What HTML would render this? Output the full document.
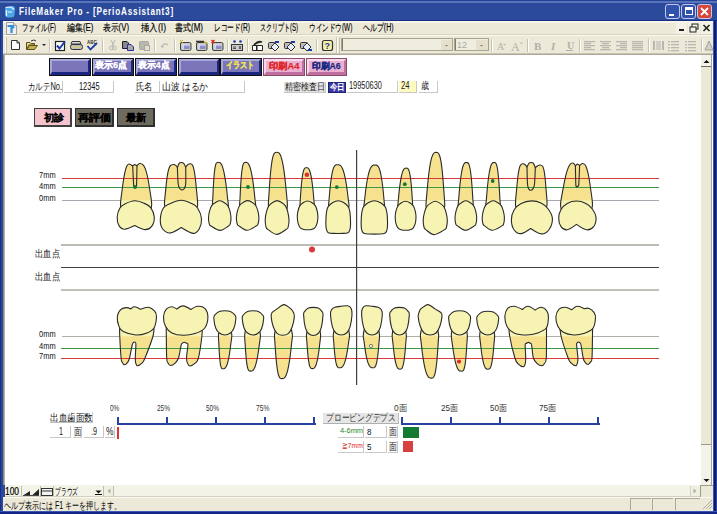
<!DOCTYPE html><html><head><meta charset="utf-8"><style>
*{margin:0;padding:0;box-sizing:border-box}
html,body{width:717px;height:514px;overflow:hidden;background:#2b4a9c}
body{position:relative;font-family:"Liberation Sans",sans-serif;font-size:11px;color:#000}
.a{position:absolute}
.t{position:absolute;white-space:nowrap;overflow:hidden;line-height:1}
</style></head><body>
<div class="a" style="left:0px;top:0px;width:717px;height:1px;background:#22419a"></div>
<div class="a" style="left:0px;top:1px;width:717px;height:2px;background:#5a74b8"></div>
<div class="a" style="left:0px;top:3px;width:717px;height:17px;background:#2b4a9c"></div>
<div class="a" style="left:0px;top:20px;width:717px;height:1px;background:#182f8a"></div>
<svg class="a" style="left:4px;top:5px" width="12" height="13" viewBox="0 0 12 13"><path d="M1 4 Q1 1.5 4 1.5 L9 1 Q11.5 1.5 11 4.5 L10.5 10 Q10 12.5 7 12.5 L3.5 12.5 Q1 12 1 9.5 Z" fill="#4aa8e8"/><path d="M1.5 2.5 L7 2 L10 4.5 M2.5 5 L2.5 11 M4 7 H8" stroke="#f0f4ff" stroke-width="1.2" fill="none"/></svg>
<div class="t" style="left:19px;top:7px;overflow:visible;color:#fff;font-weight:bold;font-size:10px;letter-spacing:1px"><span id="f1" style="display:inline-block;transform-origin:0 0;transform:scaleX(0.8170)">FileMaker Pro - [PerioAssistant3]</span></div>
<div class="a" style="left:665px;top:4px;width:15px;height:15px;background:#3152ac;border:1px solid #c4c8ee;border-radius:3px"></div>
<div class="a" style="left:681px;top:4px;width:15px;height:15px;background:#3152ac;border:1px solid #c4c8ee;border-radius:3px"></div>
<div class="a" style="left:697px;top:4px;width:15px;height:15px;background:#d8463a;border:1px solid #c4c8ee;border-radius:3px"></div>
<div class="a" style="left:669px;top:14px;width:5px;height:2px;background:#fff"></div>
<div class="a" style="left:685px;top:7px;width:8px;height:8px;border:1px solid #fff;border-top-width:3px"></div>
<svg class="a" style="left:697px;top:4px" width="15" height="15"><path d="M4 4 L11 11 M11 4 L4 11" stroke="#fff" stroke-width="1.8"/></svg>
<div class="a" style="left:0px;top:21px;width:3px;height:493px;background:#2848a0;border-left:1px solid #18308c"></div>
<div class="a" style="left:713px;top:21px;width:4px;height:493px;background:#0c1a70;border-left:1px solid #3a58b0;border-right:1px solid #2a4aa0"></div>
<div class="a" style="left:0px;top:511px;width:717px;height:3px;background:#12268a;border-top:1px solid #3a58b0"></div>
<div class="a" style="left:3px;top:21px;width:710px;height:14px;background:#ece9d8"></div>
<div class="a" style="left:3px;top:21px;width:710px;height:2px;background:#f8f6e8"></div>
<div class="a" style="left:3px;top:34px;width:710px;height:1px;background:#d8d4c0"></div>
<svg class="a" style="left:5px;top:22px" width="13" height="13"><path d="M1.5 0.5 H8.5 L11.5 3.5 V12.5 H1.5 Z" fill="#f0f0f0" stroke="#a0a0a0" stroke-width="1"/><path d="M8.5 0.5 V3.5 H11.5" fill="#d8d8d8" stroke="#a0a0a0"/><path d="M2.5 4 H7.5 L9 6 M6.5 4.5 V11" stroke="#3090e0" stroke-width="2.2" fill="none"/></svg>
<div class="t" style="left:22px;top:23px;overflow:visible;font-size:10px;color:#000;-webkit-text-stroke:0.15px #000"><span id="f2" style="display:inline-block;transform-origin:0 0;transform:scaleX(0.6442)">ファイル(F)</span></div>
<div class="t" style="left:66.5px;top:23px;overflow:visible;font-size:10px;color:#000;-webkit-text-stroke:0.15px #000"><span id="f3" style="display:inline-block;transform-origin:0 0;transform:scaleX(0.7948)">編集(E)</span></div>
<div class="t" style="left:103px;top:23px;overflow:visible;font-size:10px;color:#000;-webkit-text-stroke:0.15px #000"><span id="f4" style="display:inline-block;transform-origin:0 0;transform:scaleX(0.7798)">表示(V)</span></div>
<div class="t" style="left:140.6px;top:23px;overflow:visible;font-size:10px;color:#000;-webkit-text-stroke:0.15px #000"><span id="f5" style="display:inline-block;transform-origin:0 0;transform:scaleX(0.8488)">挿入(I)</span></div>
<div class="t" style="left:175px;top:23px;overflow:visible;font-size:10px;color:#000;-webkit-text-stroke:0.15px #000"><span id="f6" style="display:inline-block;transform-origin:0 0;transform:scaleX(0.8000)">書式(M)</span></div>
<div class="t" style="left:213.7px;top:23px;overflow:visible;font-size:10px;color:#000;-webkit-text-stroke:0.15px #000"><span id="f7" style="display:inline-block;transform-origin:0 0;transform:scaleX(0.6680)">レコード(R)</span></div>
<div class="t" style="left:259.8px;top:23px;overflow:visible;font-size:10px;color:#000;-webkit-text-stroke:0.15px #000"><span id="f8" style="display:inline-block;transform-origin:0 0;transform:scaleX(0.5999)">スクリプト(S)</span></div>
<div class="t" style="left:308.5px;top:23px;overflow:visible;font-size:10px;color:#000;-webkit-text-stroke:0.15px #000"><span id="f9" style="display:inline-block;transform-origin:0 0;transform:scaleX(0.6580)">ウインドウ(W)</span></div>
<div class="t" style="left:362.5px;top:23px;overflow:visible;font-size:10px;color:#000;-webkit-text-stroke:0.15px #000"><span id="f10" style="display:inline-block;transform-origin:0 0;transform:scaleX(0.6949)">ヘルプ(H)</span></div>
<div class="a" style="left:676px;top:22px;width:11px;height:12px;background:#f4f2e6"></div>
<div class="a" style="left:688px;top:22px;width:12px;height:12px;background:#f4f2e6"></div>
<div class="a" style="left:701px;top:22px;width:11px;height:12px;background:#f4f2e6"></div>
<div class="a" style="left:679px;top:29px;width:5px;height:2px;background:#202020"></div>
<svg class="a" style="left:688px;top:22px" width="12" height="12"><rect x="4" y="2" width="6" height="5" fill="none" stroke="#202020" stroke-width="1"/><rect x="2" y="5" width="6" height="5" fill="#f4f2e6" stroke="#202020" stroke-width="1"/></svg>
<svg class="a" style="left:701px;top:22px" width="11" height="12"><path d="M2.5 3 L8.5 9 M8.5 3 L2.5 9" stroke="#202020" stroke-width="1.6"/></svg>
<div class="a" style="left:3px;top:35px;width:710px;height:19px;background:#ece9d8"></div>
<div class="a" style="left:3px;top:35px;width:710px;height:1px;background:#faf9f0"></div>
<div class="a" style="left:3px;top:53px;width:710px;height:1px;background:#c9c5b0"></div>
<div class="a" style="left:3px;top:54px;width:710px;height:1px;background:#aca899"></div>
<svg class="a" style="left:0;top:0" width="717" height="60"><rect x="6" y="37" width="1" height="16" fill="#c8c4b0"/><rect x="5" y="37" width="1" height="16" fill="#fff"/><path d="M11.5 40.5 H17 L19.5 43 V49.5 H11.5 Z" fill="#fff" stroke="#333" stroke-width="1"/><path d="M17 40.5 V43 H19.5" fill="none" stroke="#333"/><path d="M26.5 42.5 H30 L31 43.5 H34.5 V45 H29 L26.5 49.5 Z" fill="#e8d27a" stroke="#5a5020" stroke-width="1"/><path d="M27 49.5 L29.5 45.5 H37.5 L34.5 49.5 Z" fill="#c8b050" stroke="#5a5020" stroke-width="1"/><path d="M31 41 Q34 39 36 41" stroke="#333" fill="none"/><path d="M42 44 H46 L44 46 Z" fill="#222"/><rect x="49" y="39" width="1" height="13" fill="#c5c2b2"/><rect x="50" y="39" width="1" height="13" fill="#ffffff"/><rect x="55.5" y="41.5" width="9" height="9" fill="#fff" stroke="#222" stroke-width="1.2"/><path d="M57 45.5 L59.5 48.5 L65 41.5" stroke="#1a3aa8" stroke-width="2" fill="none"/><path d="M72 41.5 H80 L81 44 H71 Z" fill="#ddd" stroke="#333"/><rect x="70.5" y="44.5" width="12" height="5" rx="2" fill="#bbb" stroke="#333"/><rect x="72" y="46.5" width="9" height="1" fill="#e0d060"/><text x="87" y="44" font-size="4.5" font-family="Liberation Sans" font-weight="bold" fill="#333">ABC</text><path d="M87.5 46 L90.5 49.5 L97 43" stroke="#1a3aa8" stroke-width="1.8" fill="none"/><rect x="102" y="39" width="1" height="13" fill="#c5c2b2"/><rect x="103" y="39" width="1" height="13" fill="#ffffff"/><path d="M111 40 L114 46 M115 40 L112 46" stroke="#b8b8b0" stroke-width="1"/><circle cx="111.5" cy="48" r="1.8" fill="none" stroke="#b8b8b0"/><circle cx="114.5" cy="48" r="1.8" fill="none" stroke="#b8b8b0"/><path d="M122.5 41.5 H127 L128.5 43 V48.5 H122.5 Z" fill="#888" stroke="#222"/><path d="M127.5 44.5 H131 L133.5 47 V50.5 H127.5 Z" fill="#aaa" stroke="#2a2aa0"/><rect x="139.5" y="41.5" width="9" height="8" rx="1" fill="#b8b8b0" stroke="#a8a8a0"/><rect x="144.5" y="45.5" width="5" height="5" fill="#e0e0d8" stroke="#a8a8a0"/><rect x="154" y="39" width="1" height="13" fill="#c5c2b2"/><rect x="155" y="39" width="1" height="13" fill="#ffffff"/><path d="M161 47 L164 44 M161 47 H164 M161.5 46.5 Q165 42 168 45" stroke="#b8b8b0" stroke-width="1.2" fill="none"/><rect x="174" y="39" width="1" height="13" fill="#c5c2b2"/><rect x="175" y="39" width="1" height="13" fill="#ffffff"/><rect x="180.5" y="42.5" width="10.5" height="8" rx="1.5" fill="#c8c8c0" stroke="#404040"/><rect x="182.5" y="44.5" width="7" height="4.5" fill="#8c8cd0"/><rect x="182.5" y="44.5" width="1.2" height="4.5" fill="#f0f0f8"/><rect x="182.5" y="44.5" width="7" height="1" fill="#f0f0f8"/><path d="M180 40 L183 43 M183 40 L180 43" stroke="#c8a820" stroke-width="1"/><rect x="196.5" y="42.5" width="10.5" height="8" rx="1.5" fill="#c8c8c0" stroke="#404040"/><rect x="198.5" y="44.5" width="7" height="4.5" fill="#8c8cd0"/><rect x="198.5" y="44.5" width="1.2" height="4.5" fill="#f0f0f8"/><rect x="198.5" y="44.5" width="7" height="1" fill="#f0f0f8"/><path d="M196 41.5 H204" stroke="#333" stroke-width="1.5"/><path d="M204 42 L207 43" stroke="#c8a820" stroke-width="1.5"/><rect x="212.5" y="42.5" width="10.5" height="8" rx="1.5" fill="#c8c8c0" stroke="#404040"/><rect x="214.5" y="44.5" width="7" height="4.5" fill="#8c8cd0"/><rect x="214.5" y="44.5" width="1.2" height="4.5" fill="#f0f0f8"/><rect x="214.5" y="44.5" width="7" height="1" fill="#f0f0f8"/><path d="M211.5 40 L214.5 43 M214.5 40 L211.5 43" stroke="#e02020" stroke-width="1.3"/><rect x="227" y="39" width="1" height="13" fill="#c5c2b2"/><rect x="228" y="39" width="1" height="13" fill="#ffffff"/><circle cx="234.5" cy="41.5" r="1.3" fill="#1a3aa8"/><circle cx="240.5" cy="41.5" r="1.3" fill="#1a3aa8"/><rect x="231.5" y="44.5" width="11" height="6" fill="#ccc" stroke="#333"/><path d="M233 47 H236 M233 48.5 H236 M239 46 L241 49 M241 46 L239 49" stroke="#333" stroke-width="0.8"/><rect x="247" y="39" width="1" height="13" fill="#c5c2b2"/><rect x="248" y="39" width="1" height="13" fill="#ffffff"/><path d="M252.5 45.5 H262.5 V50.5 H252.5 Z" fill="#fff" stroke="#222"/><path d="M254 45 Q258 40 262 42" fill="#333" stroke="#222" stroke-width="1.5"/><rect x="256" y="45" width="1.5" height="5.5" fill="#222"/><rect x="268.5" y="42.5" width="7" height="6" rx="1" fill="#bbb" stroke="#333"/><path d="M271 47 L275 43 L279 47 L275 51 Z" fill="#e8ecff" stroke="#333"/><path d="M275 42 H279" stroke="#1a3aa8" stroke-width="2"/><rect x="284.5" y="42.5" width="7" height="6" rx="1" fill="#bbb" stroke="#333"/><path d="M287 47 L291 43 L295 47 L291 51 Z" fill="#e8ecff" stroke="#333"/><path d="M291 42 H295" stroke="#1a3aa8" stroke-width="2"/><rect x="300.5" y="42.5" width="7" height="6" rx="1" fill="#bbb" stroke="#333"/><path d="M303 47 L307 43 L311 47 L307 51 Z" fill="#e8ecff" stroke="#333"/><path d="M308 50 H312" stroke="#1a3aa8" stroke-width="2"/><rect x="316" y="39" width="1" height="13" fill="#c5c2b2"/><rect x="317" y="39" width="1" height="13" fill="#ffffff"/><rect x="322.5" y="40.5" width="10" height="10" rx="2" fill="#f8f0a0" stroke="#333" stroke-width="1.2"/><text x="324.5" y="49" font-size="9" font-family="Liberation Sans" font-weight="bold" fill="#1a3aa8">?</text><rect x="336" y="37" width="1" height="16" fill="#c8c4b0"/><rect x="337" y="37" width="1" height="16" fill="#fff"/><rect x="339" y="37" width="1" height="16" fill="#c8c4b0"/><rect x="341.5" y="38.5" width="111" height="12" fill="#efedde" stroke="#a8a490"/><rect x="342" y="39" width="1" height="11" fill="#807c68"/><rect x="441" y="40" width="11" height="10" fill="#e4e0cc"/><path d="M445 45 H448 L446.5 46.5 Z" fill="#777"/><rect x="454.5" y="38.5" width="34" height="12" fill="#efedde" stroke="#a8a490"/><rect x="455" y="39" width="1" height="11" fill="#807c68"/><rect x="476" y="40" width="12" height="10" fill="#e4e0cc"/><path d="M480 45 H483 L481.5 46.5 Z" fill="#777"/><text x="457" y="48" font-size="9" font-family="Liberation Sans" fill="#aaa">12</text><rect x="491" y="39" width="1" height="13" fill="#c5c2b2"/><rect x="492" y="39" width="1" height="13" fill="#ffffff"/><text x="497" y="50" font-size="10" font-family="Liberation Serif" fill="#b0b0a8">A</text><path d="M503 44 H506 L504.5 45.5 Z" fill="#b0b0a8"/><text x="511" y="51" font-size="12" font-family="Liberation Serif" fill="#b0b0a8">A</text><path d="M520 43.5 H523 L521.5 42 Z" fill="#b0b0a8"/><rect x="527" y="39" width="1" height="13" fill="#c5c2b2"/><rect x="528" y="39" width="1" height="13" fill="#ffffff"/><text x="534" y="50" font-size="11" font-family="Liberation Serif" font-weight="bold" fill="#b0b0a8">B</text><text x="551" y="50" font-size="11" font-family="Liberation Serif" font-style="italic" font-weight="bold" fill="#b0b0a8">I</text><text x="567" y="49" font-size="10" font-family="Liberation Serif" font-weight="bold" fill="#b0b0a8">U</text><rect x="566" y="50" width="7" height="1" fill="#b0b0a8"/><rect x="579" y="39" width="1" height="13" fill="#c5c2b2"/><rect x="580" y="39" width="1" height="13" fill="#ffffff"/><rect x="584" y="41" width="11" height="1.3" fill="#b8b8b0"/><rect x="584" y="43" width="7" height="1.3" fill="#b8b8b0"/><rect x="584" y="45" width="11" height="1.3" fill="#b8b8b0"/><rect x="584" y="47" width="7" height="1.3" fill="#b8b8b0"/><rect x="584" y="49" width="11" height="1.3" fill="#b8b8b0"/><rect x="600" y="41" width="11" height="1.3" fill="#b8b8b0"/><rect x="602" y="43" width="7" height="1.3" fill="#b8b8b0"/><rect x="600" y="45" width="11" height="1.3" fill="#b8b8b0"/><rect x="602" y="47" width="7" height="1.3" fill="#b8b8b0"/><rect x="600" y="49" width="11" height="1.3" fill="#b8b8b0"/><rect x="616" y="41" width="11" height="1.3" fill="#b8b8b0"/><rect x="620" y="43" width="7" height="1.3" fill="#b8b8b0"/><rect x="616" y="45" width="11" height="1.3" fill="#b8b8b0"/><rect x="620" y="47" width="7" height="1.3" fill="#b8b8b0"/><rect x="616" y="49" width="11" height="1.3" fill="#b8b8b0"/><rect x="632" y="41" width="11" height="1.3" fill="#b8b8b0"/><rect x="632" y="43" width="11" height="1.3" fill="#b8b8b0"/><rect x="632" y="45" width="11" height="1.3" fill="#b8b8b0"/><rect x="632" y="47" width="11" height="1.3" fill="#b8b8b0"/><rect x="632" y="49" width="11" height="1.3" fill="#b8b8b0"/><rect x="648" y="39" width="1" height="13" fill="#c5c2b2"/><rect x="649" y="39" width="1" height="13" fill="#ffffff"/><rect x="653" y="41" width="2" height="9" fill="#b8b8b0"/><rect x="662" y="41" width="2" height="9" fill="#b8b8b0"/><rect x="656" y="41" width="5" height="9" fill="#cfcfc8"/><rect x="668" y="41" width="2" height="1.3" fill="#b8b8b0"/><rect x="671" y="41" width="8" height="1.3" fill="#b8b8b0"/><rect x="685" y="41" width="2" height="1.3" fill="#b8b8b0"/><rect x="688" y="41" width="8" height="1.3" fill="#b8b8b0"/><rect x="668" y="44" width="2" height="1.3" fill="#b8b8b0"/><rect x="671" y="44" width="8" height="1.3" fill="#b8b8b0"/><rect x="685" y="44" width="2" height="1.3" fill="#b8b8b0"/><rect x="688" y="44" width="8" height="1.3" fill="#b8b8b0"/><rect x="668" y="47" width="2" height="1.3" fill="#b8b8b0"/><rect x="671" y="47" width="8" height="1.3" fill="#b8b8b0"/><rect x="685" y="47" width="2" height="1.3" fill="#b8b8b0"/><rect x="688" y="47" width="8" height="1.3" fill="#b8b8b0"/><rect x="668" y="50" width="2" height="1.3" fill="#b8b8b0"/><rect x="671" y="50" width="8" height="1.3" fill="#b8b8b0"/><rect x="685" y="50" width="2" height="1.3" fill="#b8b8b0"/><rect x="688" y="50" width="8" height="1.3" fill="#b8b8b0"/><rect x="701" y="39" width="1" height="13" fill="#c5c2b2"/><rect x="702" y="39" width="1" height="13" fill="#ffffff"/><path d="M705 50 L709 41 L713 50 Z" fill="#d0d0c8" stroke="#a0a098"/></svg>
<div class="a" style="left:3px;top:55px;width:1px;height:430px;background:#8c8a74"></div>
<div class="a" style="left:4px;top:55px;width:1px;height:430px;background:#b4b2a0"></div>
<div class="a" style="left:5px;top:55px;width:696px;height:430px;background:#ffffff"></div>
<div class="a" style="left:701px;top:55px;width:12px;height:430px;background:#f4f3ea"></div>
<div class="a" style="left:711px;top:55px;width:1px;height:430px;background:#a8a498"></div>
<div class="a" style="left:712px;top:55px;width:1px;height:430px;background:#ffffff"></div>
<div class="a" style="left:702px;top:57px;width:9px;height:9px;background:#f4f3ea"></div>
<svg class="a" style="left:702px;top:57px" width="9" height="9"><path d="M1.5 6 L4.5 3 L7.5 6 Z" fill="#111"/></svg>
<div class="a" style="left:701px;top:66px;width:10px;height:379px;background:#ebe8d6;border-top:1px solid #6e6c60;border-bottom:1px solid #9d9a88"></div>
<div class="a" style="left:702px;top:475px;width:9px;height:10px;background:#f4f3ea"></div>
<svg class="a" style="left:702px;top:475px" width="9" height="10"><path d="M1.5 4 L4.5 7 L7.5 4 Z" fill="#111"/></svg>
<div class="a" style="left:5px;top:485px;width:708px;height:11px;background:#f4f3e8"></div>
<div class="a" style="left:5px;top:496px;width:708px;height:1px;background:#d4d0c0"></div>
<div class="t" style="left:5px;top:487px;overflow:visible;font-size:10px;color:#000;-webkit-text-stroke:0.2px #000"><span id="f11" style="display:inline-block;transform-origin:0 0;transform:scaleX(0.8390)">100</span></div>
<div class="a" style="left:21px;top:486px;width:1px;height:10px;background:#c0bca8"></div>
<svg class="a" style="left:21px;top:486px" width="33" height="11"><path d="M2 9.5 H9 V5 Z M11 9.5 H18 V3 Z" fill="#222"/><rect x="2" y="9" width="16" height="1" fill="#444"/><rect x="20.5" y="2.5" width="11" height="7" fill="#f4f4f4" stroke="#333"/><rect x="21" y="4.5" width="10" height="1" fill="#333"/><rect x="0" y="0" width="1" height="11" fill="#c0bca8"/><rect x="19" y="0" width="1" height="11" fill="#c0bca8"/></svg>
<div class="a" style="left:53px;top:486px;width:1px;height:10px;background:#c0bca8"></div>
<div class="t" style="left:55px;top:487px;overflow:visible;font-size:10px;color:#000"><span id="f12" style="display:inline-block;transform-origin:0 0;transform:scaleX(0.5750)">ブラウズ</span></div>
<svg class="a" style="left:95px;top:489px" width="8" height="6"><path d="M0.5 1.5 H6.5 L3.5 4.5 Z" fill="#111"/><rect x="0" y="5" width="7" height="1" fill="#111"/></svg>
<div class="a" style="left:103px;top:486px;width:1px;height:10px;background:#c0bca8"></div>
<div class="a" style="left:104px;top:486px;width:10px;height:10px;background:#f0efe4;border-right:1px solid #c0bca8"></div>
<svg class="a" style="left:104px;top:486px" width="10" height="10"><path d="M6.5 2.5 L3.5 5 L6.5 7.5 Z" fill="#b0ae9c"/></svg>
<div class="a" style="left:690px;top:486px;width:10px;height:10px;background:#f0efe4;border-left:1px solid #d8d4c4"></div>
<svg class="a" style="left:690px;top:486px" width="10" height="10"><path d="M3.5 2.5 L6.5 5 L3.5 7.5 Z" fill="#b0ae9c"/></svg>
<div class="a" style="left:700px;top:485px;width:13px;height:12px;background:#ece9d8;border-left:1px solid #9d9a88;border-top:1px solid #9d9a88"></div>
<div class="a" style="left:3px;top:497px;width:710px;height:14px;background:#ece9d8"></div>
<div class="a" style="left:3px;top:497px;width:710px;height:1px;background:#fbfaf2"></div>
<div class="t" style="left:4px;top:501px;overflow:visible;font-size:10px;color:#000"><span id="f13" style="display:inline-block;transform-origin:0 0;transform:scaleX(0.6996)">ヘルプ表示には F1 キーを押します。</span></div>
<div class="a" style="left:630px;top:498px;width:21px;height:12px;border-top:1px solid #aca899;border-left:1px solid #aca899"></div>
<div class="a" style="left:652px;top:498px;width:21px;height:12px;border-top:1px solid #aca899;border-left:1px solid #aca899"></div>
<div class="a" style="left:675px;top:498px;width:25px;height:12px;border-top:1px solid #aca899;border-left:1px solid #aca899"></div>
<svg class="a" style="left:700px;top:497px" width="13" height="13"><path d="M12 3 L3 12 M12 6 L6 12 M12 9 L9 12" stroke="#b0ae9c" stroke-width="1"/></svg>
<div class="a" style="left:49px;top:58px;width:42px;height:18px;background:#111;"></div>
<div class="a" style="left:50px;top:59px;width:40px;height:16px;background:#1f2e8e;border-top:2px solid #a8a8d8;border-left:2px solid #a8a8d8;border-right:2px solid #1a2680;border-bottom:3px solid #1a2680"></div>
<div class="a" style="left:52px;top:61px;width:36px;height:11px;background:#7b76ba"></div>
<div class="a" style="left:92px;top:58px;width:42px;height:18px;background:#111;"></div>
<div class="a" style="left:93px;top:59px;width:40px;height:16px;background:#1f2e8e;border-top:2px solid #a8a8d8;border-left:2px solid #a8a8d8;border-right:2px solid #1a2680;border-bottom:3px solid #1a2680"></div>
<div class="a" style="left:95px;top:61px;width:36px;height:11px;background:#7b76ba"></div>
<div class="t" style="left:95px;top:61px;overflow:visible;font-size:9px;font-weight:bold;color:#fff;-webkit-text-stroke:0.25px #fff"><span id="f14" style="display:inline-block;transform-origin:0 0;transform:scaleX(0.9995)">表示6点</span></div>
<div class="a" style="left:135px;top:58px;width:42px;height:18px;background:#111;"></div>
<div class="a" style="left:136px;top:59px;width:40px;height:16px;background:#1f2e8e;border-top:2px solid #a8a8d8;border-left:2px solid #a8a8d8;border-right:2px solid #1a2680;border-bottom:3px solid #1a2680"></div>
<div class="a" style="left:138px;top:61px;width:36px;height:11px;background:#7b76ba"></div>
<div class="t" style="left:138.3px;top:61px;overflow:visible;font-size:9px;font-weight:bold;color:#fff;-webkit-text-stroke:0.25px #fff"><span id="f15" style="display:inline-block;transform-origin:0 0;transform:scaleX(0.9808)">表示4点</span></div>
<div class="a" style="left:178px;top:58px;width:42px;height:18px;background:#111;"></div>
<div class="a" style="left:179px;top:59px;width:40px;height:16px;background:#1f2e8e;border-top:2px solid #a8a8d8;border-left:2px solid #a8a8d8;border-right:2px solid #1a2680;border-bottom:3px solid #1a2680"></div>
<div class="a" style="left:181px;top:61px;width:36px;height:11px;background:#7b76ba"></div>
<div class="a" style="left:220px;top:58px;width:42px;height:18px;background:#111;"></div>
<div class="a" style="left:221px;top:59px;width:40px;height:16px;background:#1f2e8e;border-top:2px solid #a8a8d8;border-left:2px solid #a8a8d8;border-right:2px solid #1a2680;border-bottom:3px solid #1a2680"></div>
<div class="a" style="left:223px;top:61px;width:36px;height:11px;background:#7b76ba"></div>
<div class="t" style="left:226.3px;top:61px;overflow:visible;font-size:9px;font-weight:bold;color:#f0e050;-webkit-text-stroke:0.25px #f0e050"><span id="f16" style="display:inline-block;transform-origin:0 0;transform:scaleX(0.7917)">イラスト</span></div>
<div class="a" style="left:263px;top:58px;width:42px;height:18px;background:#8a4a6a;"></div>
<div class="a" style="left:264px;top:59px;width:40px;height:16px;background:#e8a8cc;border-top:2px solid #f8d8ec;border-left:2px solid #f8d8ec;border-right:2px solid #c070a0;border-bottom:3px solid #c070a0"></div>
<div class="a" style="left:266px;top:61px;width:36px;height:11px;background:#eab0d2"></div>
<div class="t" style="left:268.6px;top:62px;overflow:visible;font-size:9px;font-weight:bold;color:#e02828;-webkit-text-stroke:0.25px #e02828"><span id="f17" style="display:inline-block;transform-origin:0 0;transform:scaleX(1.0300)">印刷A4</span></div>
<div class="a" style="left:306px;top:58px;width:41px;height:18px;background:#8a4a6a;"></div>
<div class="a" style="left:307px;top:59px;width:39px;height:16px;background:#e8a8cc;border-top:2px solid #f8d8ec;border-left:2px solid #f8d8ec;border-right:2px solid #c070a0;border-bottom:3px solid #c070a0"></div>
<div class="a" style="left:309px;top:61px;width:35px;height:11px;background:#eab0d2"></div>
<div class="t" style="left:312px;top:62px;overflow:visible;font-size:9px;font-weight:bold;color:#1a2a80;-webkit-text-stroke:0.25px #1a2a80"><span id="f18" style="display:inline-block;transform-origin:0 0;transform:scaleX(0.9656)">印刷A6</span></div>
<div class="a" style="left:24px;top:81px;width:39px;height:12px;background:#fff;border-right:1px solid #c8c8c8;border-bottom:1px solid #c8c8c8"></div>
<div class="t" style="left:27.9px;top:82px;overflow:visible;font-size:10px;color:#111"><span id="f19" style="display:inline-block;transform-origin:0 0;transform:scaleX(0.7462)">カルテNo.</span></div>
<div class="a" style="left:64px;top:81px;width:50px;height:12px;background:#fff;border-right:1px solid #c8c8c8;border-bottom:1px solid #c8c8c8"></div>
<div class="t" style="left:78.7px;top:82px;overflow:visible;font-size:10px;color:#111"><span id="f20" style="display:inline-block;transform-origin:0 0;transform:scaleX(0.7407)">12345</span></div>
<div class="a" style="left:135px;top:81px;width:25px;height:12px;background:#fff;border-right:1px solid #c8c8c8;border-bottom:1px solid #c8c8c8"></div>
<div class="t" style="left:135.9px;top:82px;overflow:visible;font-size:10px;color:#111"><span id="f21" style="display:inline-block;transform-origin:0 0;transform:scaleX(0.8350)">氏名</span></div>
<div class="a" style="left:161px;top:81px;width:84px;height:12px;background:#fff;border-right:1px solid #c8c8c8;border-bottom:1px solid #c8c8c8"></div>
<div class="t" style="left:161.8px;top:82px;overflow:visible;font-size:10px;color:#111"><span id="f22" style="display:inline-block;transform-origin:0 0;transform:scaleX(0.8715)">山波 はるか</span></div>
<div class="a" style="left:284px;top:82px;width:42px;height:11px;background:#e4e4e4;border-right:1px solid #c8c8c8;border-bottom:1px solid #c8c8c8"></div>
<div class="t" style="left:284.5px;top:82px;overflow:visible;font-size:10px;color:#222"><span id="f23" style="display:inline-block;transform-origin:0 0;transform:scaleX(0.8000)">精密検査日</span></div>
<div class="a" style="left:328px;top:82px;width:18px;height:11px;background:#3838a0;border:1px solid #202070"></div>
<div class="t" style="left:329.6px;top:83px;overflow:visible;font-size:9px;color:#fff;font-weight:bold"><span id="f24" style="display:inline-block;transform-origin:0 0;transform:scaleX(0.8333)">今日</span></div>
<div class="a" style="left:347px;top:81px;width:51px;height:12px;background:#fff;border-right:1px solid #c8c8c8;border-bottom:1px solid #c8c8c8"></div>
<div class="t" style="left:349.2px;top:81px;overflow:visible;font-size:10px;color:#222"><span id="f25" style="display:inline-block;transform-origin:0 0;transform:scaleX(0.7416)">19950630</span></div>
<div class="a" style="left:399px;top:81px;width:18px;height:12px;background:#fffac0;border-right:1px solid #c8c8c8;border-bottom:1px solid #c8c8c8"></div>
<div class="t" style="left:400.5px;top:81px;overflow:visible;font-size:10px;color:#222"><span id="f26" style="display:inline-block;transform-origin:0 0;transform:scaleX(0.7640)">24</span></div>
<div class="a" style="left:419px;top:81px;width:19px;height:12px;background:#fff;border-right:1px solid #c8c8c8;border-bottom:1px solid #c8c8c8"></div>
<div class="t" style="left:420.6px;top:81px;overflow:visible;font-size:10px;color:#222"><span id="f27" style="display:inline-block;transform-origin:0 0;transform:scaleX(0.8000)">歳</span></div>
<div class="a" style="left:34px;top:108px;width:38px;height:19px;background:#f6c4cc;border:1px solid #404040;border-right-width:2px;border-bottom-width:2px"></div>
<div class="t" style="left:43.6px;top:113px;overflow:visible;font-size:10px;font-weight:bold;color:#000;-webkit-text-stroke:0.1px #000"><span id="f28" style="display:inline-block;transform-origin:0 0;transform:scaleX(1.0200)">初診</span></div>
<div class="a" style="left:75px;top:108px;width:39px;height:19px;background:#6e6a5e;border:1px solid #303030;border-right-width:2px;border-bottom-width:2px"></div>
<div class="t" style="left:77.7px;top:113px;overflow:visible;font-size:10px;font-weight:bold;color:#000;-webkit-text-stroke:0.1px #000"><span id="f29" style="display:inline-block;transform-origin:0 0;transform:scaleX(1.1100)">再評価</span></div>
<div class="a" style="left:117px;top:108px;width:38px;height:19px;background:#6e6a5e;border:1px solid #303030;border-right-width:2px;border-bottom-width:2px"></div>
<div class="t" style="left:125.6px;top:113px;overflow:visible;font-size:10px;font-weight:bold;color:#000;-webkit-text-stroke:0.1px #000"><span id="f30" style="display:inline-block;transform-origin:0 0;transform:scaleX(1.0200)">最新</span></div>
<svg class="a" style="left:0;top:0" width="717" height="514"><rect x="62" y="200" width="597" height="1" fill="#a8a8b0"/><rect x="62" y="336" width="597" height="1" fill="#b0b0a8"/><defs><clipPath id="cu"><path d="M123 213 C123 213 120.63 208.97 120.5 205 C120.37 201.03 121.64 193.93 122.23 189.2 C122.82 184.47 123.46 179.96 124.04 176.6 C124.62 173.24 125.18 170.93 125.72 169.04 C126.26 167.15 126.7 166.1 127.27 165.26 C127.83 164.42 128.44 164.06 129.1 164 C129.76 163.94 130.6 164.58 131.2 164.9 C131.8 165.22 132.7 165.9 132.7 165.9 C132.7 165.9 133.2 165.53 133.55 165.3 C133.9 165.07 134.38 164.5 134.8 164.5 C135.23 164.5 135.73 165.07 136.1 165.3 C136.47 165.53 137 165.9 137 165.9 C137 165.9 137.67 164.8 138.15 164.4 C138.63 164 139.08 163.44 139.9 163.5 C140.72 163.56 142.2 163.93 143.09 164.78 C143.98 165.62 144.53 166.69 145.25 168.6 C145.97 170.51 146.7 172.85 147.43 176.25 C148.16 179.65 148.94 184.21 149.65 189 C150.36 193.79 151.78 201 151.7 205 C151.62 209 149.2 213 149.2 213 C149.2 213 123 213 123 213 Z"/><path d="M167 213 C167 213 164.71 208.93 164.5 205 C164.29 201.07 165.3 194.08 165.74 189.4 C166.18 184.72 166.67 180.27 167.15 176.95 C167.63 173.63 168.12 171.35 168.63 169.48 C169.15 167.61 169.43 166.57 170.24 165.75 C171.05 164.92 172.58 164.56 173.5 164.5 C174.42 164.44 175.1 164.87 175.75 165.4 C176.4 165.93 177.4 167.7 177.4 167.7 C177.4 167.7 178.5 164.17 179.15 163.3 C179.8 162.43 180.54 162.5 181.3 162.5 C182.06 162.5 182.97 162.52 183.7 163.3 C184.43 164.08 185.7 167.2 185.7 167.2 C185.7 167.2 186.93 165.27 187.7 164.7 C188.47 164.13 189.51 163.74 190.3 163.8 C191.09 163.86 191.88 164.22 192.46 165.07 C193.04 165.91 193.35 166.97 193.79 168.86 C194.24 170.76 194.67 173.08 195.1 176.46 C195.54 179.84 196 184.36 196.41 189.12 C196.83 193.88 197.82 201.02 197.6 205 C197.38 208.98 195.1 213 195.1 213 C195.1 213 167 213 167 213 Z"/><path d="M518 213 C518 213 515.73 208.98 515.5 205 C515.27 201.02 516.23 193.88 516.63 189.12 C517.03 184.36 517.47 179.84 517.89 176.46 C518.31 173.08 518.73 170.76 519.17 168.86 C519.6 166.97 519.89 165.91 520.5 165.07 C521.1 164.22 522.02 163.86 522.8 163.8 C523.58 163.74 524.5 164.13 525.2 164.7 C525.9 165.27 527 167.2 527 167.2 C527 167.2 528.17 164.08 528.85 163.3 C529.53 162.52 530.34 162.5 531.1 162.5 C531.86 162.5 532.7 162.43 533.4 163.3 C534.1 164.17 535.3 167.7 535.3 167.7 C535.3 167.7 536.57 166.35 537.35 165.9 C538.13 165.45 539.11 164.94 540 165 C540.89 165.06 542.01 165.41 542.66 166.23 C543.31 167.05 543.51 168.07 543.9 169.92 C544.29 171.76 544.66 174.02 545.02 177.3 C545.39 180.58 545.75 184.98 546.08 189.6 C546.41 194.22 547.26 201.1 547 205 C546.74 208.9 544.5 213 544.5 213 C544.5 213 518 213 518 213 Z"/><path d="M563 213 C563 213 560.49 209.03 560.5 205 C560.51 200.97 562.21 193.65 563.08 188.8 C563.94 183.95 564.87 179.34 565.7 175.9 C566.53 172.46 567.32 170.09 568.06 168.16 C568.79 166.22 569.42 165.15 570.13 164.29 C570.83 163.43 571.63 163.06 572.3 163 C572.97 162.94 573.63 163.38 574.15 163.9 C574.67 164.42 575.4 166.1 575.4 166.1 C575.4 166.1 575.93 165.23 576.3 164.9 C576.67 164.57 577.18 164.1 577.6 164.1 C578.02 164.1 578.47 164.65 578.8 164.9 C579.13 165.15 579.6 165.6 579.6 165.6 C579.6 165.6 580.33 164.75 580.85 164.4 C581.37 164.05 582 163.44 582.7 163.5 C583.4 163.56 584.34 163.93 585.02 164.78 C585.7 165.62 586.19 166.69 586.8 168.6 C587.41 170.51 588.04 172.85 588.68 176.25 C589.32 179.65 590.01 184.21 590.64 189 C591.28 193.79 592.61 201 592.5 205 C592.39 209 590 213 590 213 C590 213 563 213 563 213 Z"/><path d="M214.5 213 C214.5 213 212.79 208.28 212.5 206 C212.21 203.72 212.63 202.25 212.75 199.3 C212.88 196.35 213.08 191.63 213.25 188.3 C213.43 184.97 213.61 181.97 213.8 179.3 C214 176.63 214.21 174.22 214.42 172.3 C214.62 170.38 214.82 169 215.01 167.8 C215.21 166.6 215.4 165.8 215.58 165.1 C215.76 164.4 215.93 163.98 216.11 163.6 C216.28 163.22 216.44 163 216.62 162.8 C216.79 162.6 216.91 162.5 217.16 162.42 C217.4 162.34 217.75 162.3 218.1 162.3 C218.45 162.3 218.96 162.34 219.28 162.42 C219.61 162.5 219.81 162.6 220.07 162.8 C220.34 163 220.6 163.22 220.89 163.6 C221.17 163.98 221.46 164.4 221.79 165.1 C222.11 165.8 222.45 166.6 222.82 167.8 C223.19 169 223.58 170.38 223.99 172.3 C224.39 174.22 224.85 176.63 225.27 179.3 C225.68 181.97 226.09 184.97 226.5 188.3 C226.9 191.63 227.38 196.35 227.68 199.3 C227.98 202.25 228.53 203.72 228.3 206 C228.07 208.28 226.3 213 226.3 213 C226.3 213 214.5 213 214.5 213 Z"/><path d="M241.7 213 C241.7 213 239.99 208.27 239.7 206 C239.41 203.73 239.83 202.33 239.96 199.4 C240.09 196.47 240.31 191.73 240.49 188.4 C240.68 185.07 240.87 182.07 241.07 179.4 C241.27 176.73 241.5 174.32 241.71 172.4 C241.92 170.48 242.13 169.1 242.33 167.9 C242.53 166.7 242.73 165.9 242.92 165.2 C243.11 164.5 243.28 164.08 243.46 163.7 C243.64 163.32 243.81 163.1 243.99 162.9 C244.17 162.7 244.29 162.6 244.54 162.52 C244.79 162.44 245.14 162.4 245.5 162.4 C245.86 162.4 246.36 162.44 246.68 162.52 C247.01 162.6 247.2 162.7 247.47 162.9 C247.74 163.1 248 163.32 248.28 163.7 C248.56 164.08 248.85 164.5 249.17 165.2 C249.49 165.9 249.83 166.7 250.2 167.9 C250.56 169.1 250.95 170.48 251.35 172.4 C251.75 174.32 252.2 176.73 252.61 179.4 C253.03 182.07 253.43 185.07 253.83 188.4 C254.23 191.73 254.7 196.47 255 199.4 C255.29 202.33 255.83 203.73 255.6 206 C255.37 208.27 253.6 213 253.6 213 C253.6 213 241.7 213 241.7 213 Z"/><path d="M270.4 213 C270.4 213 268.58 209.95 268.4 206 C268.22 202.05 269.03 193.92 269.31 189.3 C269.59 184.68 269.81 181.63 270.08 178.3 C270.35 174.97 270.62 171.97 270.91 169.3 C271.19 166.63 271.51 164.22 271.8 162.3 C272.09 160.38 272.37 159 272.64 157.8 C272.91 156.6 273.17 155.8 273.42 155.1 C273.66 154.4 273.89 153.98 274.12 153.6 C274.35 153.22 274.56 153 274.79 152.8 C275.01 152.6 275.17 152.5 275.47 152.42 C275.77 152.34 276.2 152.3 276.6 152.3 C277 152.3 277.51 152.34 277.85 152.42 C278.2 152.5 278.39 152.6 278.66 152.8 C278.93 153 279.2 153.22 279.48 153.6 C279.77 153.98 280.06 154.4 280.38 155.1 C280.7 155.8 281.04 156.6 281.39 157.8 C281.75 159 282.13 160.38 282.53 162.3 C282.92 164.22 283.36 166.63 283.76 169.3 C284.16 171.97 284.55 174.97 284.93 178.3 C285.31 181.63 285.64 184.68 286.05 189.3 C286.46 193.92 287.51 202.05 287.4 206 C287.29 209.95 285.4 213 285.4 213 C285.4 213 270.4 213 270.4 213 Z"/><path d="M301.9 213 C301.9 213 300.22 207.38 299.9 206 C299.58 204.62 299.84 206.75 299.97 204.7 C300.1 202.65 300.42 197.03 300.66 193.7 C300.9 190.37 301.14 187.37 301.4 184.7 C301.65 182.03 301.93 179.62 302.19 177.7 C302.45 175.78 302.7 174.4 302.94 173.2 C303.18 172 303.41 171.2 303.62 170.5 C303.84 169.8 304.04 169.38 304.24 169 C304.44 168.62 304.63 168.4 304.83 168.2 C305.02 168 305.16 167.9 305.42 167.82 C305.68 167.74 306.06 167.7 306.4 167.7 C306.74 167.7 307.17 167.74 307.46 167.82 C307.75 167.9 307.92 168 308.14 168.2 C308.37 168.4 308.59 168.62 308.83 169 C309.07 169.38 309.32 169.8 309.58 170.5 C309.85 171.2 310.13 172 310.43 173.2 C310.73 174.4 311.05 175.78 311.38 177.7 C311.7 179.62 312.07 182.03 312.4 184.7 C312.73 187.37 313.06 190.37 313.37 193.7 C313.69 197.03 314.13 202.65 314.3 204.7 C314.47 206.75 314.72 204.62 314.4 206 C314.08 207.38 312.4 213 312.4 213 C312.4 213 301.9 213 301.9 213 Z"/><path d="M330.6 213 C330.6 213 328.88 207.88 328.6 206 C328.32 204.12 328.7 204.25 328.9 201.7 C329.11 199.15 329.5 194.03 329.82 190.7 C330.13 187.37 330.45 184.37 330.79 181.7 C331.13 179.03 331.5 176.62 331.84 174.7 C332.18 172.78 332.52 171.4 332.84 170.2 C333.15 169 333.46 168.2 333.75 167.5 C334.04 166.8 334.31 166.38 334.58 166 C334.85 165.62 335.1 165.4 335.37 165.2 C335.63 165 335.81 164.9 336.17 164.82 C336.53 164.74 337.03 164.7 337.5 164.7 C337.97 164.7 338.57 164.74 338.97 164.82 C339.37 164.9 339.6 165 339.92 165.2 C340.24 165.4 340.54 165.62 340.88 166 C341.21 166.38 341.55 166.8 341.92 167.5 C342.3 168.2 342.69 169 343.11 170.2 C343.53 171.4 343.98 172.78 344.44 174.7 C344.9 176.62 345.41 179.03 345.88 181.7 C346.34 184.37 346.8 187.37 347.25 190.7 C347.69 194.03 348.26 199.15 348.56 201.7 C348.85 204.25 349.26 204.12 349 206 C348.74 207.88 347 213 347 213 C347 213 330.6 213 330.6 213 Z"/><path d="M366 213 C366 213 364.27 207.83 364 206 C363.73 204.17 364.12 204.5 364.39 202 C364.66 199.5 365.2 194.33 365.62 191 C366.04 187.67 366.47 184.67 366.92 182 C367.36 179.33 367.85 176.92 368.29 175 C368.72 173.08 369.15 171.7 369.55 170.5 C369.95 169.3 370.33 168.5 370.69 167.8 C371.05 167.1 371.37 166.68 371.7 166.3 C372.02 165.92 372.32 165.7 372.63 165.5 C372.94 165.3 373.15 165.2 373.55 165.12 C373.94 165.04 374.53 165 375 165 C375.47 165 376 165.04 376.37 165.12 C376.74 165.2 376.93 165.3 377.21 165.5 C377.49 165.7 377.75 165.92 378.04 166.3 C378.32 166.68 378.61 167.1 378.92 167.8 C379.23 168.5 379.56 169.3 379.9 170.5 C380.24 171.7 380.6 173.08 380.97 175 C381.34 176.92 381.75 179.33 382.12 182 C382.48 184.67 382.84 187.67 383.18 191 C383.53 194.33 383.97 199.5 384.19 202 C384.41 204.5 384.78 204.17 384.5 206 C384.22 207.83 382.5 213 382.5 213 C382.5 213 366 213 366 213 Z"/><path d="M399.8 213 C399.8 213 398.12 207.32 397.8 206 C397.48 204.68 397.69 207.08 397.87 205.1 C398.05 203.12 398.53 197.43 398.88 194.1 C399.22 190.77 399.57 187.77 399.92 185.1 C400.28 182.43 400.67 180.02 401.02 178.1 C401.38 176.18 401.72 174.8 402.04 173.6 C402.35 172.4 402.66 171.6 402.94 170.9 C403.23 170.2 403.48 169.78 403.74 169.4 C403.99 169.02 404.23 168.8 404.47 168.6 C404.71 168.4 404.88 168.3 405.19 168.22 C405.49 168.14 405.95 168.1 406.3 168.1 C406.65 168.1 407.03 168.14 407.29 168.22 C407.56 168.3 407.69 168.4 407.89 168.6 C408.09 168.8 408.27 169.02 408.47 169.4 C408.67 169.78 408.87 170.2 409.09 170.9 C409.3 171.6 409.53 172.4 409.76 173.6 C410 174.8 410.25 176.18 410.5 178.1 C410.75 180.02 411.02 182.43 411.27 185.1 C411.52 187.77 411.75 190.77 411.98 194.1 C412.21 197.43 412.53 203.12 412.65 205.1 C412.77 207.08 413.03 204.68 412.7 206 C412.37 207.32 410.7 213 410.7 213 C410.7 213 399.8 213 399.8 213 Z"/><path d="M428 213 C428 213 426.12 209.93 426 206 C425.88 202.07 426.87 194 427.25 189.4 C427.63 184.8 427.94 181.73 428.3 178.4 C428.65 175.07 429.02 172.07 429.39 169.4 C429.77 166.73 430.18 164.32 430.55 162.4 C430.92 160.48 431.28 159.1 431.62 157.9 C431.95 156.7 432.28 155.9 432.58 155.2 C432.88 154.5 433.16 154.08 433.43 153.7 C433.7 153.32 433.95 153.1 434.21 152.9 C434.47 152.7 434.65 152.6 434.99 152.52 C435.32 152.44 435.81 152.4 436.2 152.4 C436.59 152.4 437.03 152.44 437.33 152.52 C437.64 152.6 437.8 152.7 438.03 152.9 C438.25 153.1 438.47 153.32 438.71 153.7 C438.94 154.08 439.18 154.5 439.43 155.2 C439.69 155.9 439.96 156.7 440.24 157.9 C440.52 159.1 440.81 160.48 441.12 162.4 C441.42 164.32 441.75 166.73 442.05 169.4 C442.35 172.07 442.64 175.07 442.92 178.4 C443.2 181.73 443.44 184.8 443.74 189.4 C444.03 194 444.87 202.07 444.7 206 C444.53 209.93 442.7 213 442.7 213 C442.7 213 428 213 428 213 Z"/><path d="M460.2 213 C460.2 213 458.46 208.25 458.2 206 C457.94 203.75 458.43 202.42 458.66 199.5 C458.89 196.58 459.27 191.83 459.59 188.5 C459.9 185.17 460.22 182.17 460.55 179.5 C460.88 176.83 461.24 174.42 461.57 172.5 C461.89 170.58 462.21 169.2 462.5 168 C462.8 166.8 463.08 166 463.35 165.3 C463.61 164.6 463.85 164.18 464.09 163.8 C464.33 163.42 464.54 163.2 464.77 163 C465 162.8 465.16 162.7 465.45 162.62 C465.73 162.54 466.16 162.5 466.5 162.5 C466.84 162.5 467.21 162.54 467.47 162.62 C467.73 162.7 467.86 162.8 468.06 163 C468.25 163.2 468.44 163.42 468.64 163.8 C468.83 164.18 469.03 164.6 469.25 165.3 C469.46 166 469.69 166.8 469.93 168 C470.16 169.2 470.41 170.58 470.67 172.5 C470.92 174.42 471.2 176.83 471.45 179.5 C471.7 182.17 471.94 185.17 472.18 188.5 C472.41 191.83 472.69 196.58 472.86 199.5 C473.03 202.42 473.48 203.75 473.2 206 C472.92 208.25 471.2 213 471.2 213 C471.2 213 460.2 213 460.2 213 Z"/><path d="M487.9 213 C487.9 213 486.15 208.25 485.9 206 C485.65 203.75 486.14 202.42 486.37 199.5 C486.61 196.58 486.99 191.83 487.31 188.5 C487.63 185.17 487.95 182.17 488.29 179.5 C488.62 176.83 488.98 174.42 489.31 172.5 C489.64 170.58 489.95 169.2 490.25 168 C490.55 166.8 490.83 166 491.09 165.3 C491.36 164.6 491.6 164.18 491.83 163.8 C492.07 163.42 492.29 163.2 492.51 163 C492.73 162.8 492.89 162.7 493.18 162.62 C493.46 162.54 493.88 162.5 494.2 162.5 C494.52 162.5 494.86 162.54 495.1 162.62 C495.34 162.7 495.47 162.8 495.64 163 C495.82 163.2 495.99 163.42 496.17 163.8 C496.35 164.18 496.53 164.6 496.72 165.3 C496.92 166 497.12 166.8 497.33 168 C497.54 169.2 497.76 170.58 497.99 172.5 C498.21 174.42 498.45 176.83 498.68 179.5 C498.9 182.17 499.11 185.17 499.31 188.5 C499.52 191.83 499.76 196.58 499.91 199.5 C500.05 202.42 500.48 203.75 500.2 206 C499.92 208.25 498.2 213 498.2 213 C498.2 213 487.9 213 487.9 213 Z"/></clipPath><clipPath id="cl"><path d="M119.7 325 C119.7 325 119.47 329.5 119.7 335 C119.93 340.5 120.68 353.47 121.1 358 C121.52 362.53 121.63 361.07 122.2 362.2 C122.77 363.33 123.6 364.77 124.5 364.8 C125.4 364.83 126.77 363.53 127.6 362.4 C128.43 361.27 128.73 360.9 129.5 358 C130.27 355.1 131.6 347.52 132.2 345 C132.8 342.48 132.7 343.4 133.1 342.9 C133.5 342.4 134.19 342 134.6 342 C135.01 342 135.33 342.4 135.55 342.9 C135.77 343.4 135.94 342.48 135.9 345 C135.86 347.52 135.32 354.93 135.3 358 C135.28 361.07 135.43 362.1 135.8 363.4 C136.17 364.7 136.49 365.83 137.5 365.8 C138.51 365.77 140.6 364.5 141.85 363.2 C143.1 361.9 143.09 362.7 145 358 C146.91 353.3 151.92 340.5 153.3 335 C154.68 329.5 153.3 325 153.3 325 C153.3 325 119.7 325 119.7 325 Z"/><path d="M166.3 325 C166.3 325 166.23 329.5 166.3 335 C166.37 340.5 166.42 353.35 166.7 358 C166.98 362.65 167.37 361.65 168 362.9 C168.63 364.15 169.32 365.47 170.5 365.5 C171.68 365.53 173.77 364.35 175.1 363.1 C176.43 361.85 177.48 361.02 178.5 358 C179.52 354.98 180.53 347.47 181.2 345 C181.87 342.53 181.97 343.65 182.5 343.2 C183.03 342.75 183.74 342.3 184.4 342.3 C185.06 342.3 185.87 342.75 186.45 343.2 C187.03 343.65 187.89 342.53 187.9 345 C187.91 347.47 186.54 354.9 186.5 358 C186.46 361.1 187.07 362.27 187.65 363.6 C188.23 364.93 188.81 366.03 190 366 C191.19 365.97 193.4 364.73 194.8 363.4 C196.2 362.07 197.2 362.73 198.4 358 C199.6 353.27 201.4 340.5 202 335 C202.6 329.5 202 325 202 325 C202 325 166.3 325 166.3 325 Z"/><path d="M509.5 325 C509.5 325 508.6 329.5 509.5 335 C510.4 340.5 513.41 353.13 514.9 358 C516.39 362.87 517.07 362.73 518.45 364.2 C519.83 365.67 522.1 366.77 523.2 366.8 C524.3 366.83 524.63 365.87 525.05 364.4 C525.47 362.93 525.68 361.23 525.7 358 C525.73 354.77 525.06 347.45 525.2 345 C525.34 342.55 526 343.73 526.55 343.3 C527.1 342.87 527.87 342.4 528.5 342.4 C529.13 342.4 529.83 342.87 530.35 343.3 C530.87 343.73 531.09 342.55 531.6 345 C532.11 347.45 532.5 354.93 533.4 358 C534.3 361.07 535.6 362.1 537 363.4 C538.4 364.7 540.52 365.83 541.8 365.8 C543.07 365.77 543.9 364.5 544.65 363.2 C545.4 361.9 545.99 362.7 546.3 358 C546.61 353.3 546.47 340.5 546.5 335 C546.53 329.5 546.5 325 546.5 325 C546.5 325 509.5 325 509.5 325 Z"/><path d="M560.8 325 C560.8 325 559.58 329.5 560.8 335 C562.02 340.5 566.36 353.32 568.1 358 C569.84 362.68 570 361.82 571.25 363.1 C572.5 364.38 574.58 365.67 575.6 365.7 C576.62 365.73 576.97 364.58 577.35 363.3 C577.73 362.02 578.02 361.05 577.9 358 C577.77 354.95 576.72 347.52 576.6 345 C576.48 342.48 576.9 343.4 577.2 342.9 C577.5 342.4 577.93 342 578.4 342 C578.87 342 579.57 342.4 580 342.9 C580.43 343.4 580.47 342.48 581 345 C581.53 347.52 582.53 355.15 583.2 358 C583.87 360.85 584.2 361.02 585 362.1 C585.8 363.18 587.07 364.53 588 364.5 C588.93 364.47 589.93 362.98 590.6 361.9 C591.27 360.82 591.68 362.48 592 358 C592.32 353.52 592.42 340.5 592.5 335 C592.58 329.5 592.5 325 592.5 325 C592.5 325 560.8 325 560.8 325 Z"/><path d="M220.3 326 C220.3 326 218.75 332.2 218.5 335 C218.25 337.8 218.68 340 218.8 342.8 C218.93 345.6 219.1 349.13 219.26 351.8 C219.42 354.47 219.6 356.88 219.77 358.8 C219.94 360.72 220.11 362.1 220.28 363.3 C220.45 364.5 220.61 365.3 220.77 366 C220.93 366.7 221.07 367.12 221.23 367.5 C221.38 367.88 221.52 368.1 221.67 368.3 C221.83 368.5 221.93 368.6 222.15 368.68 C222.37 368.76 222.67 368.8 223 368.8 C223.33 368.8 223.8 368.76 224.11 368.68 C224.41 368.6 224.6 368.5 224.85 368.3 C225.1 368.1 225.35 367.88 225.62 367.5 C225.89 367.12 226.16 366.7 226.47 366 C226.78 365.3 227.11 364.5 227.45 363.3 C227.8 362.1 228.18 360.72 228.56 358.8 C228.95 356.88 229.39 354.47 229.79 351.8 C230.19 349.13 230.63 345.6 230.97 342.8 C231.3 340 231.96 337.8 231.8 335 C231.64 332.2 230 326 230 326 C230 326 220.3 326 220.3 326 Z"/><path d="M246.5 326 C246.5 326 244.91 331.82 244.7 335 C244.49 338.18 245.03 341.92 245.22 345.1 C245.41 348.28 245.62 351.43 245.83 354.1 C246.04 356.77 246.28 359.18 246.51 361.1 C246.73 363.02 246.95 364.4 247.16 365.6 C247.37 366.8 247.58 367.6 247.78 368.3 C247.98 369 248.17 369.42 248.35 369.8 C248.54 370.18 248.72 370.4 248.91 370.6 C249.1 370.8 249.23 370.9 249.49 370.98 C249.76 371.06 250.12 371.1 250.5 371.1 C250.88 371.1 251.4 371.06 251.75 370.98 C252.09 370.9 252.29 370.8 252.57 370.6 C252.85 370.4 253.13 370.18 253.42 369.8 C253.72 369.42 254.03 369 254.36 368.3 C254.7 367.6 255.06 366.8 255.44 365.6 C255.82 364.4 256.23 363.02 256.65 361.1 C257.08 359.18 257.55 356.77 257.98 354.1 C258.42 351.43 258.86 348.28 259.26 345.1 C259.66 341.92 260.51 338.18 260.4 335 C260.29 331.82 258.6 326 258.6 326 C258.6 326 246.5 326 246.5 326 Z"/><path d="M276.3 326 C276.3 326 274.74 332.4 274.5 335 C274.26 337.6 274.68 338.67 274.86 341.6 C275.05 344.53 275.34 349.27 275.59 352.6 C275.84 355.93 276.1 358.93 276.37 361.6 C276.64 364.27 276.94 366.68 277.22 368.6 C277.49 370.52 277.76 371.9 278.02 373.1 C278.28 374.3 278.53 375.1 278.77 375.8 C279.01 376.5 279.23 376.92 279.46 377.3 C279.68 377.68 279.89 377.9 280.11 378.1 C280.33 378.3 280.48 378.4 280.78 378.48 C281.07 378.56 281.5 378.6 281.9 378.6 C282.3 378.6 282.83 378.56 283.19 378.48 C283.54 378.4 283.74 378.3 284.03 378.1 C284.31 377.9 284.58 377.68 284.88 377.3 C285.18 376.92 285.48 376.5 285.81 375.8 C286.15 375.1 286.5 374.3 286.88 373.1 C287.25 371.9 287.65 370.52 288.07 368.6 C288.48 366.68 288.94 364.27 289.37 361.6 C289.79 358.93 290.2 355.93 290.6 352.6 C291.01 349.27 291.49 344.53 291.79 341.6 C292.09 338.67 292.6 337.6 292.4 335 C292.2 332.4 290.6 326 290.6 326 C290.6 326 276.3 326 276.3 326 Z"/><path d="M308.3 326 C308.3 326 306.73 332.23 306.5 335 C306.27 337.77 306.76 339.83 306.94 342.6 C307.12 345.37 307.37 348.93 307.6 351.6 C307.83 354.27 308.08 356.68 308.31 358.6 C308.55 360.52 308.78 361.9 309 363.1 C309.22 364.3 309.43 365.1 309.63 365.8 C309.83 366.5 310.02 366.92 310.21 367.3 C310.4 367.68 310.58 367.9 310.77 368.1 C310.95 368.3 311.08 368.4 311.34 368.48 C311.59 368.56 311.95 368.6 312.3 368.6 C312.65 368.6 313.11 368.56 313.41 368.48 C313.72 368.4 313.89 368.3 314.14 368.1 C314.38 367.9 314.62 367.68 314.88 367.3 C315.14 366.92 315.4 366.5 315.69 365.8 C315.98 365.1 316.29 364.3 316.62 363.1 C316.94 361.9 317.29 360.52 317.65 358.6 C318.01 356.68 318.41 354.27 318.78 351.6 C319.15 348.93 319.56 345.37 319.86 342.6 C320.16 339.83 320.78 337.77 320.6 335 C320.42 332.23 318.8 326 318.8 326 C318.8 326 308.3 326 308.3 326 Z"/><path d="M335.1 326 C335.1 326 333.53 332.37 333.3 335 C333.07 337.63 333.53 339.17 333.72 341.8 C333.9 344.43 334.17 348.13 334.42 350.8 C334.66 353.47 334.93 355.88 335.19 357.8 C335.44 359.72 335.68 361.1 335.92 362.3 C336.16 363.5 336.4 364.3 336.62 365 C336.84 365.7 337.05 366.12 337.26 366.5 C337.46 366.88 337.66 367.1 337.87 367.3 C338.08 367.5 338.22 367.6 338.51 367.68 C338.8 367.76 339.2 367.8 339.6 367.8 C340 367.8 340.55 367.76 340.91 367.68 C341.27 367.6 341.48 367.5 341.78 367.3 C342.07 367.1 342.35 366.88 342.66 366.5 C342.97 366.12 343.29 365.7 343.63 365 C343.98 364.3 344.36 363.5 344.75 362.3 C345.15 361.1 345.57 359.72 346 357.8 C346.44 355.88 346.93 353.47 347.37 350.8 C347.82 348.13 348.33 344.43 348.69 341.8 C349.04 339.17 349.66 337.63 349.5 335 C349.34 332.37 347.7 326 347.7 326 C347.7 326 335.1 326 335.1 326 Z"/><path d="M365.1 326 C365.1 326 363.47 332.37 363.3 335 C363.13 337.63 363.74 339.17 364.08 341.8 C364.42 344.43 364.91 348.13 365.34 350.8 C365.77 353.47 366.24 355.88 366.66 357.8 C367.08 359.72 367.49 361.1 367.87 362.3 C368.25 363.5 368.62 364.3 368.95 365 C369.29 365.7 369.6 366.12 369.9 366.5 C370.2 366.88 370.48 367.1 370.76 367.3 C371.05 367.5 371.25 367.6 371.61 367.68 C371.96 367.76 372.5 367.8 372.9 367.8 C373.3 367.8 373.72 367.76 374.01 367.68 C374.31 367.6 374.45 367.5 374.67 367.3 C374.88 367.1 375.09 366.88 375.3 366.5 C375.52 366.12 375.74 365.7 375.97 365 C376.2 364.3 376.45 363.5 376.7 362.3 C376.95 361.1 377.21 359.72 377.48 357.8 C377.75 355.88 378.04 353.47 378.3 350.8 C378.56 348.13 378.85 344.43 379.05 341.8 C379.25 339.17 379.72 337.63 379.5 335 C379.28 332.37 377.7 326 377.7 326 C377.7 326 365.1 326 365.1 326 Z"/><path d="M394 326 C394 326 392.38 332.13 392.2 335 C392.02 337.87 392.64 340.33 392.92 343.2 C393.21 346.07 393.57 349.53 393.91 352.2 C394.25 354.87 394.62 357.28 394.95 359.2 C395.29 361.12 395.61 362.5 395.91 363.7 C396.22 364.9 396.5 365.7 396.77 366.4 C397.05 367.1 397.29 367.52 397.53 367.9 C397.78 368.28 398 368.5 398.23 368.7 C398.46 368.9 398.63 369 398.92 369.08 C399.22 369.16 399.66 369.2 400 369.2 C400.34 369.2 400.72 369.16 400.99 369.08 C401.25 369 401.39 368.9 401.59 368.7 C401.78 368.5 401.97 368.28 402.17 367.9 C402.37 367.52 402.58 367.1 402.8 366.4 C403.01 365.7 403.25 364.9 403.49 363.7 C403.73 362.5 403.98 361.12 404.24 359.2 C404.49 357.28 404.77 354.87 405.03 352.2 C405.29 349.53 405.56 346.07 405.77 343.2 C405.98 340.33 406.51 337.87 406.3 335 C406.09 332.13 404.5 326 404.5 326 C404.5 326 394 326 394 326 Z"/><path d="M422.2 326 C422.2 326 420.6 332.48 420.4 335 C420.2 337.52 420.69 338.25 421 341.1 C421.31 343.95 421.83 348.77 422.26 352.1 C422.69 355.43 423.13 358.43 423.57 361.1 C424.02 363.77 424.51 366.18 424.95 368.1 C425.39 370.02 425.81 371.4 426.2 372.6 C426.6 373.8 426.97 374.6 427.32 375.3 C427.67 376 427.99 376.42 428.3 376.8 C428.61 377.18 428.9 377.4 429.2 377.6 C429.49 377.8 429.7 377.9 430.07 377.98 C430.44 378.06 430.99 378.1 431.4 378.1 C431.81 378.1 432.23 378.06 432.53 377.98 C432.83 377.9 432.98 377.8 433.2 377.6 C433.41 377.4 433.62 377.18 433.84 376.8 C434.06 376.42 434.27 376 434.51 375.3 C434.74 374.6 434.99 373.8 435.24 372.6 C435.49 371.4 435.76 370.02 436.02 368.1 C436.29 366.18 436.58 363.77 436.84 361.1 C437.1 358.43 437.35 355.43 437.59 352.1 C437.83 348.77 438.11 343.95 438.28 341.1 C438.45 338.25 438.85 337.52 438.6 335 C438.35 332.48 436.8 326 436.8 326 C436.8 326 422.2 326 422.2 326 Z"/><path d="M453.1 326 C453.1 326 451.4 331.8 451.3 335 C451.2 338.2 452.07 342 452.49 345.2 C452.9 348.4 453.36 351.53 453.81 354.2 C454.25 356.87 454.74 359.28 455.18 361.2 C455.61 363.12 456.03 364.5 456.43 365.7 C456.82 366.9 457.19 367.7 457.54 368.4 C457.88 369.1 458.2 369.52 458.5 369.9 C458.81 370.28 459.09 370.5 459.38 370.7 C459.66 370.9 459.87 371 460.23 371.08 C460.58 371.16 461.12 371.2 461.5 371.2 C461.88 371.2 462.25 371.16 462.52 371.08 C462.79 371 462.92 370.9 463.11 370.7 C463.3 370.5 463.48 370.28 463.66 369.9 C463.85 369.52 464.04 369.1 464.24 368.4 C464.44 367.7 464.65 366.9 464.86 365.7 C465.07 364.5 465.29 363.12 465.51 361.2 C465.73 359.28 465.97 356.87 466.18 354.2 C466.39 351.53 466.6 348.4 466.78 345.2 C466.97 342 467.51 338.2 467.3 335 C467.09 331.8 465.5 326 465.5 326 C465.5 326 453.1 326 453.1 326 Z"/><path d="M481.5 326 C481.5 326 479.87 332.13 479.7 335 C479.53 337.87 480.17 340.33 480.47 343.2 C480.78 346.07 481.17 349.53 481.53 352.2 C481.89 354.87 482.28 357.28 482.64 359.2 C482.99 361.12 483.33 362.5 483.66 363.7 C483.98 364.9 484.29 365.7 484.58 366.4 C484.86 367.1 485.12 367.52 485.38 367.9 C485.64 368.28 485.88 368.5 486.13 368.7 C486.37 368.9 486.55 369 486.86 369.08 C487.17 369.16 487.64 369.2 488 369.2 C488.36 369.2 488.76 369.16 489.04 369.08 C489.32 369 489.46 368.9 489.67 368.7 C489.88 368.5 490.07 368.28 490.29 367.9 C490.5 367.52 490.71 367.1 490.94 366.4 C491.17 365.7 491.41 364.9 491.66 363.7 C491.91 362.5 492.18 361.12 492.44 359.2 C492.71 357.28 493.01 354.87 493.27 352.2 C493.54 349.53 493.83 346.07 494.05 343.2 C494.27 340.33 494.81 337.87 494.6 335 C494.39 332.13 492.8 326 492.8 326 C492.8 326 481.5 326 481.5 326 Z"/></clipPath></defs><path d="M123 213 C123 213 120.63 208.97 120.5 205 C120.37 201.03 121.64 193.93 122.23 189.2 C122.82 184.47 123.46 179.96 124.04 176.6 C124.62 173.24 125.18 170.93 125.72 169.04 C126.26 167.15 126.7 166.1 127.27 165.26 C127.83 164.42 128.44 164.06 129.1 164 C129.76 163.94 130.6 164.58 131.2 164.9 C131.8 165.22 132.7 165.9 132.7 165.9 C132.7 165.9 133.2 165.53 133.55 165.3 C133.9 165.07 134.38 164.5 134.8 164.5 C135.23 164.5 135.73 165.07 136.1 165.3 C136.47 165.53 137 165.9 137 165.9 C137 165.9 137.67 164.8 138.15 164.4 C138.63 164 139.08 163.44 139.9 163.5 C140.72 163.56 142.2 163.93 143.09 164.78 C143.98 165.62 144.53 166.69 145.25 168.6 C145.97 170.51 146.7 172.85 147.43 176.25 C148.16 179.65 148.94 184.21 149.65 189 C150.36 193.79 151.78 201 151.7 205 C151.62 209 149.2 213 149.2 213 C149.2 213 123 213 123 213 Z" fill="#f6e28e"/><path d="M167 213 C167 213 164.71 208.93 164.5 205 C164.29 201.07 165.3 194.08 165.74 189.4 C166.18 184.72 166.67 180.27 167.15 176.95 C167.63 173.63 168.12 171.35 168.63 169.48 C169.15 167.61 169.43 166.57 170.24 165.75 C171.05 164.92 172.58 164.56 173.5 164.5 C174.42 164.44 175.1 164.87 175.75 165.4 C176.4 165.93 177.4 167.7 177.4 167.7 C177.4 167.7 178.5 164.17 179.15 163.3 C179.8 162.43 180.54 162.5 181.3 162.5 C182.06 162.5 182.97 162.52 183.7 163.3 C184.43 164.08 185.7 167.2 185.7 167.2 C185.7 167.2 186.93 165.27 187.7 164.7 C188.47 164.13 189.51 163.74 190.3 163.8 C191.09 163.86 191.88 164.22 192.46 165.07 C193.04 165.91 193.35 166.97 193.79 168.86 C194.24 170.76 194.67 173.08 195.1 176.46 C195.54 179.84 196 184.36 196.41 189.12 C196.83 193.88 197.82 201.02 197.6 205 C197.38 208.98 195.1 213 195.1 213 C195.1 213 167 213 167 213 Z" fill="#f6e28e"/><path d="M518 213 C518 213 515.73 208.98 515.5 205 C515.27 201.02 516.23 193.88 516.63 189.12 C517.03 184.36 517.47 179.84 517.89 176.46 C518.31 173.08 518.73 170.76 519.17 168.86 C519.6 166.97 519.89 165.91 520.5 165.07 C521.1 164.22 522.02 163.86 522.8 163.8 C523.58 163.74 524.5 164.13 525.2 164.7 C525.9 165.27 527 167.2 527 167.2 C527 167.2 528.17 164.08 528.85 163.3 C529.53 162.52 530.34 162.5 531.1 162.5 C531.86 162.5 532.7 162.43 533.4 163.3 C534.1 164.17 535.3 167.7 535.3 167.7 C535.3 167.7 536.57 166.35 537.35 165.9 C538.13 165.45 539.11 164.94 540 165 C540.89 165.06 542.01 165.41 542.66 166.23 C543.31 167.05 543.51 168.07 543.9 169.92 C544.29 171.76 544.66 174.02 545.02 177.3 C545.39 180.58 545.75 184.98 546.08 189.6 C546.41 194.22 547.26 201.1 547 205 C546.74 208.9 544.5 213 544.5 213 C544.5 213 518 213 518 213 Z" fill="#f6e28e"/><path d="M563 213 C563 213 560.49 209.03 560.5 205 C560.51 200.97 562.21 193.65 563.08 188.8 C563.94 183.95 564.87 179.34 565.7 175.9 C566.53 172.46 567.32 170.09 568.06 168.16 C568.79 166.22 569.42 165.15 570.13 164.29 C570.83 163.43 571.63 163.06 572.3 163 C572.97 162.94 573.63 163.38 574.15 163.9 C574.67 164.42 575.4 166.1 575.4 166.1 C575.4 166.1 575.93 165.23 576.3 164.9 C576.67 164.57 577.18 164.1 577.6 164.1 C578.02 164.1 578.47 164.65 578.8 164.9 C579.13 165.15 579.6 165.6 579.6 165.6 C579.6 165.6 580.33 164.75 580.85 164.4 C581.37 164.05 582 163.44 582.7 163.5 C583.4 163.56 584.34 163.93 585.02 164.78 C585.7 165.62 586.19 166.69 586.8 168.6 C587.41 170.51 588.04 172.85 588.68 176.25 C589.32 179.65 590.01 184.21 590.64 189 C591.28 193.79 592.61 201 592.5 205 C592.39 209 590 213 590 213 C590 213 563 213 563 213 Z" fill="#f6e28e"/><path d="M214.5 213 C214.5 213 212.79 208.28 212.5 206 C212.21 203.72 212.63 202.25 212.75 199.3 C212.88 196.35 213.08 191.63 213.25 188.3 C213.43 184.97 213.61 181.97 213.8 179.3 C214 176.63 214.21 174.22 214.42 172.3 C214.62 170.38 214.82 169 215.01 167.8 C215.21 166.6 215.4 165.8 215.58 165.1 C215.76 164.4 215.93 163.98 216.11 163.6 C216.28 163.22 216.44 163 216.62 162.8 C216.79 162.6 216.91 162.5 217.16 162.42 C217.4 162.34 217.75 162.3 218.1 162.3 C218.45 162.3 218.96 162.34 219.28 162.42 C219.61 162.5 219.81 162.6 220.07 162.8 C220.34 163 220.6 163.22 220.89 163.6 C221.17 163.98 221.46 164.4 221.79 165.1 C222.11 165.8 222.45 166.6 222.82 167.8 C223.19 169 223.58 170.38 223.99 172.3 C224.39 174.22 224.85 176.63 225.27 179.3 C225.68 181.97 226.09 184.97 226.5 188.3 C226.9 191.63 227.38 196.35 227.68 199.3 C227.98 202.25 228.53 203.72 228.3 206 C228.07 208.28 226.3 213 226.3 213 C226.3 213 214.5 213 214.5 213 Z" fill="#f6e28e"/><path d="M241.7 213 C241.7 213 239.99 208.27 239.7 206 C239.41 203.73 239.83 202.33 239.96 199.4 C240.09 196.47 240.31 191.73 240.49 188.4 C240.68 185.07 240.87 182.07 241.07 179.4 C241.27 176.73 241.5 174.32 241.71 172.4 C241.92 170.48 242.13 169.1 242.33 167.9 C242.53 166.7 242.73 165.9 242.92 165.2 C243.11 164.5 243.28 164.08 243.46 163.7 C243.64 163.32 243.81 163.1 243.99 162.9 C244.17 162.7 244.29 162.6 244.54 162.52 C244.79 162.44 245.14 162.4 245.5 162.4 C245.86 162.4 246.36 162.44 246.68 162.52 C247.01 162.6 247.2 162.7 247.47 162.9 C247.74 163.1 248 163.32 248.28 163.7 C248.56 164.08 248.85 164.5 249.17 165.2 C249.49 165.9 249.83 166.7 250.2 167.9 C250.56 169.1 250.95 170.48 251.35 172.4 C251.75 174.32 252.2 176.73 252.61 179.4 C253.03 182.07 253.43 185.07 253.83 188.4 C254.23 191.73 254.7 196.47 255 199.4 C255.29 202.33 255.83 203.73 255.6 206 C255.37 208.27 253.6 213 253.6 213 C253.6 213 241.7 213 241.7 213 Z" fill="#f6e28e"/><path d="M270.4 213 C270.4 213 268.58 209.95 268.4 206 C268.22 202.05 269.03 193.92 269.31 189.3 C269.59 184.68 269.81 181.63 270.08 178.3 C270.35 174.97 270.62 171.97 270.91 169.3 C271.19 166.63 271.51 164.22 271.8 162.3 C272.09 160.38 272.37 159 272.64 157.8 C272.91 156.6 273.17 155.8 273.42 155.1 C273.66 154.4 273.89 153.98 274.12 153.6 C274.35 153.22 274.56 153 274.79 152.8 C275.01 152.6 275.17 152.5 275.47 152.42 C275.77 152.34 276.2 152.3 276.6 152.3 C277 152.3 277.51 152.34 277.85 152.42 C278.2 152.5 278.39 152.6 278.66 152.8 C278.93 153 279.2 153.22 279.48 153.6 C279.77 153.98 280.06 154.4 280.38 155.1 C280.7 155.8 281.04 156.6 281.39 157.8 C281.75 159 282.13 160.38 282.53 162.3 C282.92 164.22 283.36 166.63 283.76 169.3 C284.16 171.97 284.55 174.97 284.93 178.3 C285.31 181.63 285.64 184.68 286.05 189.3 C286.46 193.92 287.51 202.05 287.4 206 C287.29 209.95 285.4 213 285.4 213 C285.4 213 270.4 213 270.4 213 Z" fill="#f6e28e"/><path d="M301.9 213 C301.9 213 300.22 207.38 299.9 206 C299.58 204.62 299.84 206.75 299.97 204.7 C300.1 202.65 300.42 197.03 300.66 193.7 C300.9 190.37 301.14 187.37 301.4 184.7 C301.65 182.03 301.93 179.62 302.19 177.7 C302.45 175.78 302.7 174.4 302.94 173.2 C303.18 172 303.41 171.2 303.62 170.5 C303.84 169.8 304.04 169.38 304.24 169 C304.44 168.62 304.63 168.4 304.83 168.2 C305.02 168 305.16 167.9 305.42 167.82 C305.68 167.74 306.06 167.7 306.4 167.7 C306.74 167.7 307.17 167.74 307.46 167.82 C307.75 167.9 307.92 168 308.14 168.2 C308.37 168.4 308.59 168.62 308.83 169 C309.07 169.38 309.32 169.8 309.58 170.5 C309.85 171.2 310.13 172 310.43 173.2 C310.73 174.4 311.05 175.78 311.38 177.7 C311.7 179.62 312.07 182.03 312.4 184.7 C312.73 187.37 313.06 190.37 313.37 193.7 C313.69 197.03 314.13 202.65 314.3 204.7 C314.47 206.75 314.72 204.62 314.4 206 C314.08 207.38 312.4 213 312.4 213 C312.4 213 301.9 213 301.9 213 Z" fill="#f6e28e"/><path d="M330.6 213 C330.6 213 328.88 207.88 328.6 206 C328.32 204.12 328.7 204.25 328.9 201.7 C329.11 199.15 329.5 194.03 329.82 190.7 C330.13 187.37 330.45 184.37 330.79 181.7 C331.13 179.03 331.5 176.62 331.84 174.7 C332.18 172.78 332.52 171.4 332.84 170.2 C333.15 169 333.46 168.2 333.75 167.5 C334.04 166.8 334.31 166.38 334.58 166 C334.85 165.62 335.1 165.4 335.37 165.2 C335.63 165 335.81 164.9 336.17 164.82 C336.53 164.74 337.03 164.7 337.5 164.7 C337.97 164.7 338.57 164.74 338.97 164.82 C339.37 164.9 339.6 165 339.92 165.2 C340.24 165.4 340.54 165.62 340.88 166 C341.21 166.38 341.55 166.8 341.92 167.5 C342.3 168.2 342.69 169 343.11 170.2 C343.53 171.4 343.98 172.78 344.44 174.7 C344.9 176.62 345.41 179.03 345.88 181.7 C346.34 184.37 346.8 187.37 347.25 190.7 C347.69 194.03 348.26 199.15 348.56 201.7 C348.85 204.25 349.26 204.12 349 206 C348.74 207.88 347 213 347 213 C347 213 330.6 213 330.6 213 Z" fill="#f6e28e"/><path d="M366 213 C366 213 364.27 207.83 364 206 C363.73 204.17 364.12 204.5 364.39 202 C364.66 199.5 365.2 194.33 365.62 191 C366.04 187.67 366.47 184.67 366.92 182 C367.36 179.33 367.85 176.92 368.29 175 C368.72 173.08 369.15 171.7 369.55 170.5 C369.95 169.3 370.33 168.5 370.69 167.8 C371.05 167.1 371.37 166.68 371.7 166.3 C372.02 165.92 372.32 165.7 372.63 165.5 C372.94 165.3 373.15 165.2 373.55 165.12 C373.94 165.04 374.53 165 375 165 C375.47 165 376 165.04 376.37 165.12 C376.74 165.2 376.93 165.3 377.21 165.5 C377.49 165.7 377.75 165.92 378.04 166.3 C378.32 166.68 378.61 167.1 378.92 167.8 C379.23 168.5 379.56 169.3 379.9 170.5 C380.24 171.7 380.6 173.08 380.97 175 C381.34 176.92 381.75 179.33 382.12 182 C382.48 184.67 382.84 187.67 383.18 191 C383.53 194.33 383.97 199.5 384.19 202 C384.41 204.5 384.78 204.17 384.5 206 C384.22 207.83 382.5 213 382.5 213 C382.5 213 366 213 366 213 Z" fill="#f6e28e"/><path d="M399.8 213 C399.8 213 398.12 207.32 397.8 206 C397.48 204.68 397.69 207.08 397.87 205.1 C398.05 203.12 398.53 197.43 398.88 194.1 C399.22 190.77 399.57 187.77 399.92 185.1 C400.28 182.43 400.67 180.02 401.02 178.1 C401.38 176.18 401.72 174.8 402.04 173.6 C402.35 172.4 402.66 171.6 402.94 170.9 C403.23 170.2 403.48 169.78 403.74 169.4 C403.99 169.02 404.23 168.8 404.47 168.6 C404.71 168.4 404.88 168.3 405.19 168.22 C405.49 168.14 405.95 168.1 406.3 168.1 C406.65 168.1 407.03 168.14 407.29 168.22 C407.56 168.3 407.69 168.4 407.89 168.6 C408.09 168.8 408.27 169.02 408.47 169.4 C408.67 169.78 408.87 170.2 409.09 170.9 C409.3 171.6 409.53 172.4 409.76 173.6 C410 174.8 410.25 176.18 410.5 178.1 C410.75 180.02 411.02 182.43 411.27 185.1 C411.52 187.77 411.75 190.77 411.98 194.1 C412.21 197.43 412.53 203.12 412.65 205.1 C412.77 207.08 413.03 204.68 412.7 206 C412.37 207.32 410.7 213 410.7 213 C410.7 213 399.8 213 399.8 213 Z" fill="#f6e28e"/><path d="M428 213 C428 213 426.12 209.93 426 206 C425.88 202.07 426.87 194 427.25 189.4 C427.63 184.8 427.94 181.73 428.3 178.4 C428.65 175.07 429.02 172.07 429.39 169.4 C429.77 166.73 430.18 164.32 430.55 162.4 C430.92 160.48 431.28 159.1 431.62 157.9 C431.95 156.7 432.28 155.9 432.58 155.2 C432.88 154.5 433.16 154.08 433.43 153.7 C433.7 153.32 433.95 153.1 434.21 152.9 C434.47 152.7 434.65 152.6 434.99 152.52 C435.32 152.44 435.81 152.4 436.2 152.4 C436.59 152.4 437.03 152.44 437.33 152.52 C437.64 152.6 437.8 152.7 438.03 152.9 C438.25 153.1 438.47 153.32 438.71 153.7 C438.94 154.08 439.18 154.5 439.43 155.2 C439.69 155.9 439.96 156.7 440.24 157.9 C440.52 159.1 440.81 160.48 441.12 162.4 C441.42 164.32 441.75 166.73 442.05 169.4 C442.35 172.07 442.64 175.07 442.92 178.4 C443.2 181.73 443.44 184.8 443.74 189.4 C444.03 194 444.87 202.07 444.7 206 C444.53 209.93 442.7 213 442.7 213 C442.7 213 428 213 428 213 Z" fill="#f6e28e"/><path d="M460.2 213 C460.2 213 458.46 208.25 458.2 206 C457.94 203.75 458.43 202.42 458.66 199.5 C458.89 196.58 459.27 191.83 459.59 188.5 C459.9 185.17 460.22 182.17 460.55 179.5 C460.88 176.83 461.24 174.42 461.57 172.5 C461.89 170.58 462.21 169.2 462.5 168 C462.8 166.8 463.08 166 463.35 165.3 C463.61 164.6 463.85 164.18 464.09 163.8 C464.33 163.42 464.54 163.2 464.77 163 C465 162.8 465.16 162.7 465.45 162.62 C465.73 162.54 466.16 162.5 466.5 162.5 C466.84 162.5 467.21 162.54 467.47 162.62 C467.73 162.7 467.86 162.8 468.06 163 C468.25 163.2 468.44 163.42 468.64 163.8 C468.83 164.18 469.03 164.6 469.25 165.3 C469.46 166 469.69 166.8 469.93 168 C470.16 169.2 470.41 170.58 470.67 172.5 C470.92 174.42 471.2 176.83 471.45 179.5 C471.7 182.17 471.94 185.17 472.18 188.5 C472.41 191.83 472.69 196.58 472.86 199.5 C473.03 202.42 473.48 203.75 473.2 206 C472.92 208.25 471.2 213 471.2 213 C471.2 213 460.2 213 460.2 213 Z" fill="#f6e28e"/><path d="M487.9 213 C487.9 213 486.15 208.25 485.9 206 C485.65 203.75 486.14 202.42 486.37 199.5 C486.61 196.58 486.99 191.83 487.31 188.5 C487.63 185.17 487.95 182.17 488.29 179.5 C488.62 176.83 488.98 174.42 489.31 172.5 C489.64 170.58 489.95 169.2 490.25 168 C490.55 166.8 490.83 166 491.09 165.3 C491.36 164.6 491.6 164.18 491.83 163.8 C492.07 163.42 492.29 163.2 492.51 163 C492.73 162.8 492.89 162.7 493.18 162.62 C493.46 162.54 493.88 162.5 494.2 162.5 C494.52 162.5 494.86 162.54 495.1 162.62 C495.34 162.7 495.47 162.8 495.64 163 C495.82 163.2 495.99 163.42 496.17 163.8 C496.35 164.18 496.53 164.6 496.72 165.3 C496.92 166 497.12 166.8 497.33 168 C497.54 169.2 497.76 170.58 497.99 172.5 C498.21 174.42 498.45 176.83 498.68 179.5 C498.9 182.17 499.11 185.17 499.31 188.5 C499.52 191.83 499.76 196.58 499.91 199.5 C500.05 202.42 500.48 203.75 500.2 206 C499.92 208.25 498.2 213 498.2 213 C498.2 213 487.9 213 487.9 213 Z" fill="#f6e28e"/><path d="M119.7 325 C119.7 325 119.47 329.5 119.7 335 C119.93 340.5 120.68 353.47 121.1 358 C121.52 362.53 121.63 361.07 122.2 362.2 C122.77 363.33 123.6 364.77 124.5 364.8 C125.4 364.83 126.77 363.53 127.6 362.4 C128.43 361.27 128.73 360.9 129.5 358 C130.27 355.1 131.6 347.52 132.2 345 C132.8 342.48 132.7 343.4 133.1 342.9 C133.5 342.4 134.19 342 134.6 342 C135.01 342 135.33 342.4 135.55 342.9 C135.77 343.4 135.94 342.48 135.9 345 C135.86 347.52 135.32 354.93 135.3 358 C135.28 361.07 135.43 362.1 135.8 363.4 C136.17 364.7 136.49 365.83 137.5 365.8 C138.51 365.77 140.6 364.5 141.85 363.2 C143.1 361.9 143.09 362.7 145 358 C146.91 353.3 151.92 340.5 153.3 335 C154.68 329.5 153.3 325 153.3 325 C153.3 325 119.7 325 119.7 325 Z" fill="#f6e28e"/><path d="M166.3 325 C166.3 325 166.23 329.5 166.3 335 C166.37 340.5 166.42 353.35 166.7 358 C166.98 362.65 167.37 361.65 168 362.9 C168.63 364.15 169.32 365.47 170.5 365.5 C171.68 365.53 173.77 364.35 175.1 363.1 C176.43 361.85 177.48 361.02 178.5 358 C179.52 354.98 180.53 347.47 181.2 345 C181.87 342.53 181.97 343.65 182.5 343.2 C183.03 342.75 183.74 342.3 184.4 342.3 C185.06 342.3 185.87 342.75 186.45 343.2 C187.03 343.65 187.89 342.53 187.9 345 C187.91 347.47 186.54 354.9 186.5 358 C186.46 361.1 187.07 362.27 187.65 363.6 C188.23 364.93 188.81 366.03 190 366 C191.19 365.97 193.4 364.73 194.8 363.4 C196.2 362.07 197.2 362.73 198.4 358 C199.6 353.27 201.4 340.5 202 335 C202.6 329.5 202 325 202 325 C202 325 166.3 325 166.3 325 Z" fill="#f6e28e"/><path d="M509.5 325 C509.5 325 508.6 329.5 509.5 335 C510.4 340.5 513.41 353.13 514.9 358 C516.39 362.87 517.07 362.73 518.45 364.2 C519.83 365.67 522.1 366.77 523.2 366.8 C524.3 366.83 524.63 365.87 525.05 364.4 C525.47 362.93 525.68 361.23 525.7 358 C525.73 354.77 525.06 347.45 525.2 345 C525.34 342.55 526 343.73 526.55 343.3 C527.1 342.87 527.87 342.4 528.5 342.4 C529.13 342.4 529.83 342.87 530.35 343.3 C530.87 343.73 531.09 342.55 531.6 345 C532.11 347.45 532.5 354.93 533.4 358 C534.3 361.07 535.6 362.1 537 363.4 C538.4 364.7 540.52 365.83 541.8 365.8 C543.07 365.77 543.9 364.5 544.65 363.2 C545.4 361.9 545.99 362.7 546.3 358 C546.61 353.3 546.47 340.5 546.5 335 C546.53 329.5 546.5 325 546.5 325 C546.5 325 509.5 325 509.5 325 Z" fill="#f6e28e"/><path d="M560.8 325 C560.8 325 559.58 329.5 560.8 335 C562.02 340.5 566.36 353.32 568.1 358 C569.84 362.68 570 361.82 571.25 363.1 C572.5 364.38 574.58 365.67 575.6 365.7 C576.62 365.73 576.97 364.58 577.35 363.3 C577.73 362.02 578.02 361.05 577.9 358 C577.77 354.95 576.72 347.52 576.6 345 C576.48 342.48 576.9 343.4 577.2 342.9 C577.5 342.4 577.93 342 578.4 342 C578.87 342 579.57 342.4 580 342.9 C580.43 343.4 580.47 342.48 581 345 C581.53 347.52 582.53 355.15 583.2 358 C583.87 360.85 584.2 361.02 585 362.1 C585.8 363.18 587.07 364.53 588 364.5 C588.93 364.47 589.93 362.98 590.6 361.9 C591.27 360.82 591.68 362.48 592 358 C592.32 353.52 592.42 340.5 592.5 335 C592.58 329.5 592.5 325 592.5 325 C592.5 325 560.8 325 560.8 325 Z" fill="#f6e28e"/><path d="M220.3 326 C220.3 326 218.75 332.2 218.5 335 C218.25 337.8 218.68 340 218.8 342.8 C218.93 345.6 219.1 349.13 219.26 351.8 C219.42 354.47 219.6 356.88 219.77 358.8 C219.94 360.72 220.11 362.1 220.28 363.3 C220.45 364.5 220.61 365.3 220.77 366 C220.93 366.7 221.07 367.12 221.23 367.5 C221.38 367.88 221.52 368.1 221.67 368.3 C221.83 368.5 221.93 368.6 222.15 368.68 C222.37 368.76 222.67 368.8 223 368.8 C223.33 368.8 223.8 368.76 224.11 368.68 C224.41 368.6 224.6 368.5 224.85 368.3 C225.1 368.1 225.35 367.88 225.62 367.5 C225.89 367.12 226.16 366.7 226.47 366 C226.78 365.3 227.11 364.5 227.45 363.3 C227.8 362.1 228.18 360.72 228.56 358.8 C228.95 356.88 229.39 354.47 229.79 351.8 C230.19 349.13 230.63 345.6 230.97 342.8 C231.3 340 231.96 337.8 231.8 335 C231.64 332.2 230 326 230 326 C230 326 220.3 326 220.3 326 Z" fill="#f6e28e"/><path d="M246.5 326 C246.5 326 244.91 331.82 244.7 335 C244.49 338.18 245.03 341.92 245.22 345.1 C245.41 348.28 245.62 351.43 245.83 354.1 C246.04 356.77 246.28 359.18 246.51 361.1 C246.73 363.02 246.95 364.4 247.16 365.6 C247.37 366.8 247.58 367.6 247.78 368.3 C247.98 369 248.17 369.42 248.35 369.8 C248.54 370.18 248.72 370.4 248.91 370.6 C249.1 370.8 249.23 370.9 249.49 370.98 C249.76 371.06 250.12 371.1 250.5 371.1 C250.88 371.1 251.4 371.06 251.75 370.98 C252.09 370.9 252.29 370.8 252.57 370.6 C252.85 370.4 253.13 370.18 253.42 369.8 C253.72 369.42 254.03 369 254.36 368.3 C254.7 367.6 255.06 366.8 255.44 365.6 C255.82 364.4 256.23 363.02 256.65 361.1 C257.08 359.18 257.55 356.77 257.98 354.1 C258.42 351.43 258.86 348.28 259.26 345.1 C259.66 341.92 260.51 338.18 260.4 335 C260.29 331.82 258.6 326 258.6 326 C258.6 326 246.5 326 246.5 326 Z" fill="#f6e28e"/><path d="M276.3 326 C276.3 326 274.74 332.4 274.5 335 C274.26 337.6 274.68 338.67 274.86 341.6 C275.05 344.53 275.34 349.27 275.59 352.6 C275.84 355.93 276.1 358.93 276.37 361.6 C276.64 364.27 276.94 366.68 277.22 368.6 C277.49 370.52 277.76 371.9 278.02 373.1 C278.28 374.3 278.53 375.1 278.77 375.8 C279.01 376.5 279.23 376.92 279.46 377.3 C279.68 377.68 279.89 377.9 280.11 378.1 C280.33 378.3 280.48 378.4 280.78 378.48 C281.07 378.56 281.5 378.6 281.9 378.6 C282.3 378.6 282.83 378.56 283.19 378.48 C283.54 378.4 283.74 378.3 284.03 378.1 C284.31 377.9 284.58 377.68 284.88 377.3 C285.18 376.92 285.48 376.5 285.81 375.8 C286.15 375.1 286.5 374.3 286.88 373.1 C287.25 371.9 287.65 370.52 288.07 368.6 C288.48 366.68 288.94 364.27 289.37 361.6 C289.79 358.93 290.2 355.93 290.6 352.6 C291.01 349.27 291.49 344.53 291.79 341.6 C292.09 338.67 292.6 337.6 292.4 335 C292.2 332.4 290.6 326 290.6 326 C290.6 326 276.3 326 276.3 326 Z" fill="#f6e28e"/><path d="M308.3 326 C308.3 326 306.73 332.23 306.5 335 C306.27 337.77 306.76 339.83 306.94 342.6 C307.12 345.37 307.37 348.93 307.6 351.6 C307.83 354.27 308.08 356.68 308.31 358.6 C308.55 360.52 308.78 361.9 309 363.1 C309.22 364.3 309.43 365.1 309.63 365.8 C309.83 366.5 310.02 366.92 310.21 367.3 C310.4 367.68 310.58 367.9 310.77 368.1 C310.95 368.3 311.08 368.4 311.34 368.48 C311.59 368.56 311.95 368.6 312.3 368.6 C312.65 368.6 313.11 368.56 313.41 368.48 C313.72 368.4 313.89 368.3 314.14 368.1 C314.38 367.9 314.62 367.68 314.88 367.3 C315.14 366.92 315.4 366.5 315.69 365.8 C315.98 365.1 316.29 364.3 316.62 363.1 C316.94 361.9 317.29 360.52 317.65 358.6 C318.01 356.68 318.41 354.27 318.78 351.6 C319.15 348.93 319.56 345.37 319.86 342.6 C320.16 339.83 320.78 337.77 320.6 335 C320.42 332.23 318.8 326 318.8 326 C318.8 326 308.3 326 308.3 326 Z" fill="#f6e28e"/><path d="M335.1 326 C335.1 326 333.53 332.37 333.3 335 C333.07 337.63 333.53 339.17 333.72 341.8 C333.9 344.43 334.17 348.13 334.42 350.8 C334.66 353.47 334.93 355.88 335.19 357.8 C335.44 359.72 335.68 361.1 335.92 362.3 C336.16 363.5 336.4 364.3 336.62 365 C336.84 365.7 337.05 366.12 337.26 366.5 C337.46 366.88 337.66 367.1 337.87 367.3 C338.08 367.5 338.22 367.6 338.51 367.68 C338.8 367.76 339.2 367.8 339.6 367.8 C340 367.8 340.55 367.76 340.91 367.68 C341.27 367.6 341.48 367.5 341.78 367.3 C342.07 367.1 342.35 366.88 342.66 366.5 C342.97 366.12 343.29 365.7 343.63 365 C343.98 364.3 344.36 363.5 344.75 362.3 C345.15 361.1 345.57 359.72 346 357.8 C346.44 355.88 346.93 353.47 347.37 350.8 C347.82 348.13 348.33 344.43 348.69 341.8 C349.04 339.17 349.66 337.63 349.5 335 C349.34 332.37 347.7 326 347.7 326 C347.7 326 335.1 326 335.1 326 Z" fill="#f6e28e"/><path d="M365.1 326 C365.1 326 363.47 332.37 363.3 335 C363.13 337.63 363.74 339.17 364.08 341.8 C364.42 344.43 364.91 348.13 365.34 350.8 C365.77 353.47 366.24 355.88 366.66 357.8 C367.08 359.72 367.49 361.1 367.87 362.3 C368.25 363.5 368.62 364.3 368.95 365 C369.29 365.7 369.6 366.12 369.9 366.5 C370.2 366.88 370.48 367.1 370.76 367.3 C371.05 367.5 371.25 367.6 371.61 367.68 C371.96 367.76 372.5 367.8 372.9 367.8 C373.3 367.8 373.72 367.76 374.01 367.68 C374.31 367.6 374.45 367.5 374.67 367.3 C374.88 367.1 375.09 366.88 375.3 366.5 C375.52 366.12 375.74 365.7 375.97 365 C376.2 364.3 376.45 363.5 376.7 362.3 C376.95 361.1 377.21 359.72 377.48 357.8 C377.75 355.88 378.04 353.47 378.3 350.8 C378.56 348.13 378.85 344.43 379.05 341.8 C379.25 339.17 379.72 337.63 379.5 335 C379.28 332.37 377.7 326 377.7 326 C377.7 326 365.1 326 365.1 326 Z" fill="#f6e28e"/><path d="M394 326 C394 326 392.38 332.13 392.2 335 C392.02 337.87 392.64 340.33 392.92 343.2 C393.21 346.07 393.57 349.53 393.91 352.2 C394.25 354.87 394.62 357.28 394.95 359.2 C395.29 361.12 395.61 362.5 395.91 363.7 C396.22 364.9 396.5 365.7 396.77 366.4 C397.05 367.1 397.29 367.52 397.53 367.9 C397.78 368.28 398 368.5 398.23 368.7 C398.46 368.9 398.63 369 398.92 369.08 C399.22 369.16 399.66 369.2 400 369.2 C400.34 369.2 400.72 369.16 400.99 369.08 C401.25 369 401.39 368.9 401.59 368.7 C401.78 368.5 401.97 368.28 402.17 367.9 C402.37 367.52 402.58 367.1 402.8 366.4 C403.01 365.7 403.25 364.9 403.49 363.7 C403.73 362.5 403.98 361.12 404.24 359.2 C404.49 357.28 404.77 354.87 405.03 352.2 C405.29 349.53 405.56 346.07 405.77 343.2 C405.98 340.33 406.51 337.87 406.3 335 C406.09 332.13 404.5 326 404.5 326 C404.5 326 394 326 394 326 Z" fill="#f6e28e"/><path d="M422.2 326 C422.2 326 420.6 332.48 420.4 335 C420.2 337.52 420.69 338.25 421 341.1 C421.31 343.95 421.83 348.77 422.26 352.1 C422.69 355.43 423.13 358.43 423.57 361.1 C424.02 363.77 424.51 366.18 424.95 368.1 C425.39 370.02 425.81 371.4 426.2 372.6 C426.6 373.8 426.97 374.6 427.32 375.3 C427.67 376 427.99 376.42 428.3 376.8 C428.61 377.18 428.9 377.4 429.2 377.6 C429.49 377.8 429.7 377.9 430.07 377.98 C430.44 378.06 430.99 378.1 431.4 378.1 C431.81 378.1 432.23 378.06 432.53 377.98 C432.83 377.9 432.98 377.8 433.2 377.6 C433.41 377.4 433.62 377.18 433.84 376.8 C434.06 376.42 434.27 376 434.51 375.3 C434.74 374.6 434.99 373.8 435.24 372.6 C435.49 371.4 435.76 370.02 436.02 368.1 C436.29 366.18 436.58 363.77 436.84 361.1 C437.1 358.43 437.35 355.43 437.59 352.1 C437.83 348.77 438.11 343.95 438.28 341.1 C438.45 338.25 438.85 337.52 438.6 335 C438.35 332.48 436.8 326 436.8 326 C436.8 326 422.2 326 422.2 326 Z" fill="#f6e28e"/><path d="M453.1 326 C453.1 326 451.4 331.8 451.3 335 C451.2 338.2 452.07 342 452.49 345.2 C452.9 348.4 453.36 351.53 453.81 354.2 C454.25 356.87 454.74 359.28 455.18 361.2 C455.61 363.12 456.03 364.5 456.43 365.7 C456.82 366.9 457.19 367.7 457.54 368.4 C457.88 369.1 458.2 369.52 458.5 369.9 C458.81 370.28 459.09 370.5 459.38 370.7 C459.66 370.9 459.87 371 460.23 371.08 C460.58 371.16 461.12 371.2 461.5 371.2 C461.88 371.2 462.25 371.16 462.52 371.08 C462.79 371 462.92 370.9 463.11 370.7 C463.3 370.5 463.48 370.28 463.66 369.9 C463.85 369.52 464.04 369.1 464.24 368.4 C464.44 367.7 464.65 366.9 464.86 365.7 C465.07 364.5 465.29 363.12 465.51 361.2 C465.73 359.28 465.97 356.87 466.18 354.2 C466.39 351.53 466.6 348.4 466.78 345.2 C466.97 342 467.51 338.2 467.3 335 C467.09 331.8 465.5 326 465.5 326 C465.5 326 453.1 326 453.1 326 Z" fill="#f6e28e"/><path d="M481.5 326 C481.5 326 479.87 332.13 479.7 335 C479.53 337.87 480.17 340.33 480.47 343.2 C480.78 346.07 481.17 349.53 481.53 352.2 C481.89 354.87 482.28 357.28 482.64 359.2 C482.99 361.12 483.33 362.5 483.66 363.7 C483.98 364.9 484.29 365.7 484.58 366.4 C484.86 367.1 485.12 367.52 485.38 367.9 C485.64 368.28 485.88 368.5 486.13 368.7 C486.37 368.9 486.55 369 486.86 369.08 C487.17 369.16 487.64 369.2 488 369.2 C488.36 369.2 488.76 369.16 489.04 369.08 C489.32 369 489.46 368.9 489.67 368.7 C489.88 368.5 490.07 368.28 490.29 367.9 C490.5 367.52 490.71 367.1 490.94 366.4 C491.17 365.7 491.41 364.9 491.66 363.7 C491.91 362.5 492.18 361.12 492.44 359.2 C492.71 357.28 493.01 354.87 493.27 352.2 C493.54 349.53 493.83 346.07 494.05 343.2 C494.27 340.33 494.81 337.87 494.6 335 C494.39 332.13 492.8 326 492.8 326 C492.8 326 481.5 326 481.5 326 Z" fill="#f6e28e"/><rect x="60" y="200.5" width="600" height="14" fill="#f6f3b3" clip-path="url(#cu)"/><rect x="60" y="322" width="600" height="14.3" fill="#f6f3b3" clip-path="url(#cl)"/><rect x="62" y="178" width="597" height="1" fill="#d83838"/><rect x="62" y="187" width="597" height="1" fill="#3a9a4a"/><rect x="61" y="348" width="598" height="1" fill="#3a9a4a"/><rect x="61" y="358" width="598" height="1" fill="#d83838"/><path d="M123 213 C123 213 120.63 208.97 120.5 205 C120.37 201.03 121.64 193.93 122.23 189.2 C122.82 184.47 123.46 179.96 124.04 176.6 C124.62 173.24 125.18 170.93 125.72 169.04 C126.26 167.15 126.7 166.1 127.27 165.26 C127.83 164.42 128.44 164.06 129.1 164 C129.76 163.94 130.6 164.58 131.2 164.9 C131.8 165.22 132.7 165.9 132.7 165.9 C132.7 165.9 133.2 165.53 133.55 165.3 C133.9 165.07 134.38 164.5 134.8 164.5 C135.23 164.5 135.73 165.07 136.1 165.3 C136.47 165.53 137 165.9 137 165.9 C137 165.9 137.67 164.8 138.15 164.4 C138.63 164 139.08 163.44 139.9 163.5 C140.72 163.56 142.2 163.93 143.09 164.78 C143.98 165.62 144.53 166.69 145.25 168.6 C145.97 170.51 146.7 172.85 147.43 176.25 C148.16 179.65 148.94 184.21 149.65 189 C150.36 193.79 151.78 201 151.7 205 C151.62 209 149.2 213 149.2 213 C149.2 213 123 213 123 213 Z" fill="none" stroke="#2a2a2a" stroke-width="1.1" stroke-linejoin="round"/><path d="M167 213 C167 213 164.71 208.93 164.5 205 C164.29 201.07 165.3 194.08 165.74 189.4 C166.18 184.72 166.67 180.27 167.15 176.95 C167.63 173.63 168.12 171.35 168.63 169.48 C169.15 167.61 169.43 166.57 170.24 165.75 C171.05 164.92 172.58 164.56 173.5 164.5 C174.42 164.44 175.1 164.87 175.75 165.4 C176.4 165.93 177.4 167.7 177.4 167.7 C177.4 167.7 178.5 164.17 179.15 163.3 C179.8 162.43 180.54 162.5 181.3 162.5 C182.06 162.5 182.97 162.52 183.7 163.3 C184.43 164.08 185.7 167.2 185.7 167.2 C185.7 167.2 186.93 165.27 187.7 164.7 C188.47 164.13 189.51 163.74 190.3 163.8 C191.09 163.86 191.88 164.22 192.46 165.07 C193.04 165.91 193.35 166.97 193.79 168.86 C194.24 170.76 194.67 173.08 195.1 176.46 C195.54 179.84 196 184.36 196.41 189.12 C196.83 193.88 197.82 201.02 197.6 205 C197.38 208.98 195.1 213 195.1 213 C195.1 213 167 213 167 213 Z" fill="none" stroke="#2a2a2a" stroke-width="1.1" stroke-linejoin="round"/><path d="M518 213 C518 213 515.73 208.98 515.5 205 C515.27 201.02 516.23 193.88 516.63 189.12 C517.03 184.36 517.47 179.84 517.89 176.46 C518.31 173.08 518.73 170.76 519.17 168.86 C519.6 166.97 519.89 165.91 520.5 165.07 C521.1 164.22 522.02 163.86 522.8 163.8 C523.58 163.74 524.5 164.13 525.2 164.7 C525.9 165.27 527 167.2 527 167.2 C527 167.2 528.17 164.08 528.85 163.3 C529.53 162.52 530.34 162.5 531.1 162.5 C531.86 162.5 532.7 162.43 533.4 163.3 C534.1 164.17 535.3 167.7 535.3 167.7 C535.3 167.7 536.57 166.35 537.35 165.9 C538.13 165.45 539.11 164.94 540 165 C540.89 165.06 542.01 165.41 542.66 166.23 C543.31 167.05 543.51 168.07 543.9 169.92 C544.29 171.76 544.66 174.02 545.02 177.3 C545.39 180.58 545.75 184.98 546.08 189.6 C546.41 194.22 547.26 201.1 547 205 C546.74 208.9 544.5 213 544.5 213 C544.5 213 518 213 518 213 Z" fill="none" stroke="#2a2a2a" stroke-width="1.1" stroke-linejoin="round"/><path d="M563 213 C563 213 560.49 209.03 560.5 205 C560.51 200.97 562.21 193.65 563.08 188.8 C563.94 183.95 564.87 179.34 565.7 175.9 C566.53 172.46 567.32 170.09 568.06 168.16 C568.79 166.22 569.42 165.15 570.13 164.29 C570.83 163.43 571.63 163.06 572.3 163 C572.97 162.94 573.63 163.38 574.15 163.9 C574.67 164.42 575.4 166.1 575.4 166.1 C575.4 166.1 575.93 165.23 576.3 164.9 C576.67 164.57 577.18 164.1 577.6 164.1 C578.02 164.1 578.47 164.65 578.8 164.9 C579.13 165.15 579.6 165.6 579.6 165.6 C579.6 165.6 580.33 164.75 580.85 164.4 C581.37 164.05 582 163.44 582.7 163.5 C583.4 163.56 584.34 163.93 585.02 164.78 C585.7 165.62 586.19 166.69 586.8 168.6 C587.41 170.51 588.04 172.85 588.68 176.25 C589.32 179.65 590.01 184.21 590.64 189 C591.28 193.79 592.61 201 592.5 205 C592.39 209 590 213 590 213 C590 213 563 213 563 213 Z" fill="none" stroke="#2a2a2a" stroke-width="1.1" stroke-linejoin="round"/><path d="M214.5 213 C214.5 213 212.79 208.28 212.5 206 C212.21 203.72 212.63 202.25 212.75 199.3 C212.88 196.35 213.08 191.63 213.25 188.3 C213.43 184.97 213.61 181.97 213.8 179.3 C214 176.63 214.21 174.22 214.42 172.3 C214.62 170.38 214.82 169 215.01 167.8 C215.21 166.6 215.4 165.8 215.58 165.1 C215.76 164.4 215.93 163.98 216.11 163.6 C216.28 163.22 216.44 163 216.62 162.8 C216.79 162.6 216.91 162.5 217.16 162.42 C217.4 162.34 217.75 162.3 218.1 162.3 C218.45 162.3 218.96 162.34 219.28 162.42 C219.61 162.5 219.81 162.6 220.07 162.8 C220.34 163 220.6 163.22 220.89 163.6 C221.17 163.98 221.46 164.4 221.79 165.1 C222.11 165.8 222.45 166.6 222.82 167.8 C223.19 169 223.58 170.38 223.99 172.3 C224.39 174.22 224.85 176.63 225.27 179.3 C225.68 181.97 226.09 184.97 226.5 188.3 C226.9 191.63 227.38 196.35 227.68 199.3 C227.98 202.25 228.53 203.72 228.3 206 C228.07 208.28 226.3 213 226.3 213 C226.3 213 214.5 213 214.5 213 Z" fill="none" stroke="#2a2a2a" stroke-width="1.1" stroke-linejoin="round"/><path d="M241.7 213 C241.7 213 239.99 208.27 239.7 206 C239.41 203.73 239.83 202.33 239.96 199.4 C240.09 196.47 240.31 191.73 240.49 188.4 C240.68 185.07 240.87 182.07 241.07 179.4 C241.27 176.73 241.5 174.32 241.71 172.4 C241.92 170.48 242.13 169.1 242.33 167.9 C242.53 166.7 242.73 165.9 242.92 165.2 C243.11 164.5 243.28 164.08 243.46 163.7 C243.64 163.32 243.81 163.1 243.99 162.9 C244.17 162.7 244.29 162.6 244.54 162.52 C244.79 162.44 245.14 162.4 245.5 162.4 C245.86 162.4 246.36 162.44 246.68 162.52 C247.01 162.6 247.2 162.7 247.47 162.9 C247.74 163.1 248 163.32 248.28 163.7 C248.56 164.08 248.85 164.5 249.17 165.2 C249.49 165.9 249.83 166.7 250.2 167.9 C250.56 169.1 250.95 170.48 251.35 172.4 C251.75 174.32 252.2 176.73 252.61 179.4 C253.03 182.07 253.43 185.07 253.83 188.4 C254.23 191.73 254.7 196.47 255 199.4 C255.29 202.33 255.83 203.73 255.6 206 C255.37 208.27 253.6 213 253.6 213 C253.6 213 241.7 213 241.7 213 Z" fill="none" stroke="#2a2a2a" stroke-width="1.1" stroke-linejoin="round"/><path d="M270.4 213 C270.4 213 268.58 209.95 268.4 206 C268.22 202.05 269.03 193.92 269.31 189.3 C269.59 184.68 269.81 181.63 270.08 178.3 C270.35 174.97 270.62 171.97 270.91 169.3 C271.19 166.63 271.51 164.22 271.8 162.3 C272.09 160.38 272.37 159 272.64 157.8 C272.91 156.6 273.17 155.8 273.42 155.1 C273.66 154.4 273.89 153.98 274.12 153.6 C274.35 153.22 274.56 153 274.79 152.8 C275.01 152.6 275.17 152.5 275.47 152.42 C275.77 152.34 276.2 152.3 276.6 152.3 C277 152.3 277.51 152.34 277.85 152.42 C278.2 152.5 278.39 152.6 278.66 152.8 C278.93 153 279.2 153.22 279.48 153.6 C279.77 153.98 280.06 154.4 280.38 155.1 C280.7 155.8 281.04 156.6 281.39 157.8 C281.75 159 282.13 160.38 282.53 162.3 C282.92 164.22 283.36 166.63 283.76 169.3 C284.16 171.97 284.55 174.97 284.93 178.3 C285.31 181.63 285.64 184.68 286.05 189.3 C286.46 193.92 287.51 202.05 287.4 206 C287.29 209.95 285.4 213 285.4 213 C285.4 213 270.4 213 270.4 213 Z" fill="none" stroke="#2a2a2a" stroke-width="1.1" stroke-linejoin="round"/><path d="M301.9 213 C301.9 213 300.22 207.38 299.9 206 C299.58 204.62 299.84 206.75 299.97 204.7 C300.1 202.65 300.42 197.03 300.66 193.7 C300.9 190.37 301.14 187.37 301.4 184.7 C301.65 182.03 301.93 179.62 302.19 177.7 C302.45 175.78 302.7 174.4 302.94 173.2 C303.18 172 303.41 171.2 303.62 170.5 C303.84 169.8 304.04 169.38 304.24 169 C304.44 168.62 304.63 168.4 304.83 168.2 C305.02 168 305.16 167.9 305.42 167.82 C305.68 167.74 306.06 167.7 306.4 167.7 C306.74 167.7 307.17 167.74 307.46 167.82 C307.75 167.9 307.92 168 308.14 168.2 C308.37 168.4 308.59 168.62 308.83 169 C309.07 169.38 309.32 169.8 309.58 170.5 C309.85 171.2 310.13 172 310.43 173.2 C310.73 174.4 311.05 175.78 311.38 177.7 C311.7 179.62 312.07 182.03 312.4 184.7 C312.73 187.37 313.06 190.37 313.37 193.7 C313.69 197.03 314.13 202.65 314.3 204.7 C314.47 206.75 314.72 204.62 314.4 206 C314.08 207.38 312.4 213 312.4 213 C312.4 213 301.9 213 301.9 213 Z" fill="none" stroke="#2a2a2a" stroke-width="1.1" stroke-linejoin="round"/><path d="M330.6 213 C330.6 213 328.88 207.88 328.6 206 C328.32 204.12 328.7 204.25 328.9 201.7 C329.11 199.15 329.5 194.03 329.82 190.7 C330.13 187.37 330.45 184.37 330.79 181.7 C331.13 179.03 331.5 176.62 331.84 174.7 C332.18 172.78 332.52 171.4 332.84 170.2 C333.15 169 333.46 168.2 333.75 167.5 C334.04 166.8 334.31 166.38 334.58 166 C334.85 165.62 335.1 165.4 335.37 165.2 C335.63 165 335.81 164.9 336.17 164.82 C336.53 164.74 337.03 164.7 337.5 164.7 C337.97 164.7 338.57 164.74 338.97 164.82 C339.37 164.9 339.6 165 339.92 165.2 C340.24 165.4 340.54 165.62 340.88 166 C341.21 166.38 341.55 166.8 341.92 167.5 C342.3 168.2 342.69 169 343.11 170.2 C343.53 171.4 343.98 172.78 344.44 174.7 C344.9 176.62 345.41 179.03 345.88 181.7 C346.34 184.37 346.8 187.37 347.25 190.7 C347.69 194.03 348.26 199.15 348.56 201.7 C348.85 204.25 349.26 204.12 349 206 C348.74 207.88 347 213 347 213 C347 213 330.6 213 330.6 213 Z" fill="none" stroke="#2a2a2a" stroke-width="1.1" stroke-linejoin="round"/><path d="M366 213 C366 213 364.27 207.83 364 206 C363.73 204.17 364.12 204.5 364.39 202 C364.66 199.5 365.2 194.33 365.62 191 C366.04 187.67 366.47 184.67 366.92 182 C367.36 179.33 367.85 176.92 368.29 175 C368.72 173.08 369.15 171.7 369.55 170.5 C369.95 169.3 370.33 168.5 370.69 167.8 C371.05 167.1 371.37 166.68 371.7 166.3 C372.02 165.92 372.32 165.7 372.63 165.5 C372.94 165.3 373.15 165.2 373.55 165.12 C373.94 165.04 374.53 165 375 165 C375.47 165 376 165.04 376.37 165.12 C376.74 165.2 376.93 165.3 377.21 165.5 C377.49 165.7 377.75 165.92 378.04 166.3 C378.32 166.68 378.61 167.1 378.92 167.8 C379.23 168.5 379.56 169.3 379.9 170.5 C380.24 171.7 380.6 173.08 380.97 175 C381.34 176.92 381.75 179.33 382.12 182 C382.48 184.67 382.84 187.67 383.18 191 C383.53 194.33 383.97 199.5 384.19 202 C384.41 204.5 384.78 204.17 384.5 206 C384.22 207.83 382.5 213 382.5 213 C382.5 213 366 213 366 213 Z" fill="none" stroke="#2a2a2a" stroke-width="1.1" stroke-linejoin="round"/><path d="M399.8 213 C399.8 213 398.12 207.32 397.8 206 C397.48 204.68 397.69 207.08 397.87 205.1 C398.05 203.12 398.53 197.43 398.88 194.1 C399.22 190.77 399.57 187.77 399.92 185.1 C400.28 182.43 400.67 180.02 401.02 178.1 C401.38 176.18 401.72 174.8 402.04 173.6 C402.35 172.4 402.66 171.6 402.94 170.9 C403.23 170.2 403.48 169.78 403.74 169.4 C403.99 169.02 404.23 168.8 404.47 168.6 C404.71 168.4 404.88 168.3 405.19 168.22 C405.49 168.14 405.95 168.1 406.3 168.1 C406.65 168.1 407.03 168.14 407.29 168.22 C407.56 168.3 407.69 168.4 407.89 168.6 C408.09 168.8 408.27 169.02 408.47 169.4 C408.67 169.78 408.87 170.2 409.09 170.9 C409.3 171.6 409.53 172.4 409.76 173.6 C410 174.8 410.25 176.18 410.5 178.1 C410.75 180.02 411.02 182.43 411.27 185.1 C411.52 187.77 411.75 190.77 411.98 194.1 C412.21 197.43 412.53 203.12 412.65 205.1 C412.77 207.08 413.03 204.68 412.7 206 C412.37 207.32 410.7 213 410.7 213 C410.7 213 399.8 213 399.8 213 Z" fill="none" stroke="#2a2a2a" stroke-width="1.1" stroke-linejoin="round"/><path d="M428 213 C428 213 426.12 209.93 426 206 C425.88 202.07 426.87 194 427.25 189.4 C427.63 184.8 427.94 181.73 428.3 178.4 C428.65 175.07 429.02 172.07 429.39 169.4 C429.77 166.73 430.18 164.32 430.55 162.4 C430.92 160.48 431.28 159.1 431.62 157.9 C431.95 156.7 432.28 155.9 432.58 155.2 C432.88 154.5 433.16 154.08 433.43 153.7 C433.7 153.32 433.95 153.1 434.21 152.9 C434.47 152.7 434.65 152.6 434.99 152.52 C435.32 152.44 435.81 152.4 436.2 152.4 C436.59 152.4 437.03 152.44 437.33 152.52 C437.64 152.6 437.8 152.7 438.03 152.9 C438.25 153.1 438.47 153.32 438.71 153.7 C438.94 154.08 439.18 154.5 439.43 155.2 C439.69 155.9 439.96 156.7 440.24 157.9 C440.52 159.1 440.81 160.48 441.12 162.4 C441.42 164.32 441.75 166.73 442.05 169.4 C442.35 172.07 442.64 175.07 442.92 178.4 C443.2 181.73 443.44 184.8 443.74 189.4 C444.03 194 444.87 202.07 444.7 206 C444.53 209.93 442.7 213 442.7 213 C442.7 213 428 213 428 213 Z" fill="none" stroke="#2a2a2a" stroke-width="1.1" stroke-linejoin="round"/><path d="M460.2 213 C460.2 213 458.46 208.25 458.2 206 C457.94 203.75 458.43 202.42 458.66 199.5 C458.89 196.58 459.27 191.83 459.59 188.5 C459.9 185.17 460.22 182.17 460.55 179.5 C460.88 176.83 461.24 174.42 461.57 172.5 C461.89 170.58 462.21 169.2 462.5 168 C462.8 166.8 463.08 166 463.35 165.3 C463.61 164.6 463.85 164.18 464.09 163.8 C464.33 163.42 464.54 163.2 464.77 163 C465 162.8 465.16 162.7 465.45 162.62 C465.73 162.54 466.16 162.5 466.5 162.5 C466.84 162.5 467.21 162.54 467.47 162.62 C467.73 162.7 467.86 162.8 468.06 163 C468.25 163.2 468.44 163.42 468.64 163.8 C468.83 164.18 469.03 164.6 469.25 165.3 C469.46 166 469.69 166.8 469.93 168 C470.16 169.2 470.41 170.58 470.67 172.5 C470.92 174.42 471.2 176.83 471.45 179.5 C471.7 182.17 471.94 185.17 472.18 188.5 C472.41 191.83 472.69 196.58 472.86 199.5 C473.03 202.42 473.48 203.75 473.2 206 C472.92 208.25 471.2 213 471.2 213 C471.2 213 460.2 213 460.2 213 Z" fill="none" stroke="#2a2a2a" stroke-width="1.1" stroke-linejoin="round"/><path d="M487.9 213 C487.9 213 486.15 208.25 485.9 206 C485.65 203.75 486.14 202.42 486.37 199.5 C486.61 196.58 486.99 191.83 487.31 188.5 C487.63 185.17 487.95 182.17 488.29 179.5 C488.62 176.83 488.98 174.42 489.31 172.5 C489.64 170.58 489.95 169.2 490.25 168 C490.55 166.8 490.83 166 491.09 165.3 C491.36 164.6 491.6 164.18 491.83 163.8 C492.07 163.42 492.29 163.2 492.51 163 C492.73 162.8 492.89 162.7 493.18 162.62 C493.46 162.54 493.88 162.5 494.2 162.5 C494.52 162.5 494.86 162.54 495.1 162.62 C495.34 162.7 495.47 162.8 495.64 163 C495.82 163.2 495.99 163.42 496.17 163.8 C496.35 164.18 496.53 164.6 496.72 165.3 C496.92 166 497.12 166.8 497.33 168 C497.54 169.2 497.76 170.58 497.99 172.5 C498.21 174.42 498.45 176.83 498.68 179.5 C498.9 182.17 499.11 185.17 499.31 188.5 C499.52 191.83 499.76 196.58 499.91 199.5 C500.05 202.42 500.48 203.75 500.2 206 C499.92 208.25 498.2 213 498.2 213 C498.2 213 487.9 213 487.9 213 Z" fill="none" stroke="#2a2a2a" stroke-width="1.1" stroke-linejoin="round"/><path d="M119.7 325 C119.7 325 119.47 329.5 119.7 335 C119.93 340.5 120.68 353.47 121.1 358 C121.52 362.53 121.63 361.07 122.2 362.2 C122.77 363.33 123.6 364.77 124.5 364.8 C125.4 364.83 126.77 363.53 127.6 362.4 C128.43 361.27 128.73 360.9 129.5 358 C130.27 355.1 131.6 347.52 132.2 345 C132.8 342.48 132.7 343.4 133.1 342.9 C133.5 342.4 134.19 342 134.6 342 C135.01 342 135.33 342.4 135.55 342.9 C135.77 343.4 135.94 342.48 135.9 345 C135.86 347.52 135.32 354.93 135.3 358 C135.28 361.07 135.43 362.1 135.8 363.4 C136.17 364.7 136.49 365.83 137.5 365.8 C138.51 365.77 140.6 364.5 141.85 363.2 C143.1 361.9 143.09 362.7 145 358 C146.91 353.3 151.92 340.5 153.3 335 C154.68 329.5 153.3 325 153.3 325 C153.3 325 119.7 325 119.7 325 Z" fill="none" stroke="#2a2a2a" stroke-width="1.1" stroke-linejoin="round"/><path d="M166.3 325 C166.3 325 166.23 329.5 166.3 335 C166.37 340.5 166.42 353.35 166.7 358 C166.98 362.65 167.37 361.65 168 362.9 C168.63 364.15 169.32 365.47 170.5 365.5 C171.68 365.53 173.77 364.35 175.1 363.1 C176.43 361.85 177.48 361.02 178.5 358 C179.52 354.98 180.53 347.47 181.2 345 C181.87 342.53 181.97 343.65 182.5 343.2 C183.03 342.75 183.74 342.3 184.4 342.3 C185.06 342.3 185.87 342.75 186.45 343.2 C187.03 343.65 187.89 342.53 187.9 345 C187.91 347.47 186.54 354.9 186.5 358 C186.46 361.1 187.07 362.27 187.65 363.6 C188.23 364.93 188.81 366.03 190 366 C191.19 365.97 193.4 364.73 194.8 363.4 C196.2 362.07 197.2 362.73 198.4 358 C199.6 353.27 201.4 340.5 202 335 C202.6 329.5 202 325 202 325 C202 325 166.3 325 166.3 325 Z" fill="none" stroke="#2a2a2a" stroke-width="1.1" stroke-linejoin="round"/><path d="M509.5 325 C509.5 325 508.6 329.5 509.5 335 C510.4 340.5 513.41 353.13 514.9 358 C516.39 362.87 517.07 362.73 518.45 364.2 C519.83 365.67 522.1 366.77 523.2 366.8 C524.3 366.83 524.63 365.87 525.05 364.4 C525.47 362.93 525.68 361.23 525.7 358 C525.73 354.77 525.06 347.45 525.2 345 C525.34 342.55 526 343.73 526.55 343.3 C527.1 342.87 527.87 342.4 528.5 342.4 C529.13 342.4 529.83 342.87 530.35 343.3 C530.87 343.73 531.09 342.55 531.6 345 C532.11 347.45 532.5 354.93 533.4 358 C534.3 361.07 535.6 362.1 537 363.4 C538.4 364.7 540.52 365.83 541.8 365.8 C543.07 365.77 543.9 364.5 544.65 363.2 C545.4 361.9 545.99 362.7 546.3 358 C546.61 353.3 546.47 340.5 546.5 335 C546.53 329.5 546.5 325 546.5 325 C546.5 325 509.5 325 509.5 325 Z" fill="none" stroke="#2a2a2a" stroke-width="1.1" stroke-linejoin="round"/><path d="M560.8 325 C560.8 325 559.58 329.5 560.8 335 C562.02 340.5 566.36 353.32 568.1 358 C569.84 362.68 570 361.82 571.25 363.1 C572.5 364.38 574.58 365.67 575.6 365.7 C576.62 365.73 576.97 364.58 577.35 363.3 C577.73 362.02 578.02 361.05 577.9 358 C577.77 354.95 576.72 347.52 576.6 345 C576.48 342.48 576.9 343.4 577.2 342.9 C577.5 342.4 577.93 342 578.4 342 C578.87 342 579.57 342.4 580 342.9 C580.43 343.4 580.47 342.48 581 345 C581.53 347.52 582.53 355.15 583.2 358 C583.87 360.85 584.2 361.02 585 362.1 C585.8 363.18 587.07 364.53 588 364.5 C588.93 364.47 589.93 362.98 590.6 361.9 C591.27 360.82 591.68 362.48 592 358 C592.32 353.52 592.42 340.5 592.5 335 C592.58 329.5 592.5 325 592.5 325 C592.5 325 560.8 325 560.8 325 Z" fill="none" stroke="#2a2a2a" stroke-width="1.1" stroke-linejoin="round"/><path d="M220.3 326 C220.3 326 218.75 332.2 218.5 335 C218.25 337.8 218.68 340 218.8 342.8 C218.93 345.6 219.1 349.13 219.26 351.8 C219.42 354.47 219.6 356.88 219.77 358.8 C219.94 360.72 220.11 362.1 220.28 363.3 C220.45 364.5 220.61 365.3 220.77 366 C220.93 366.7 221.07 367.12 221.23 367.5 C221.38 367.88 221.52 368.1 221.67 368.3 C221.83 368.5 221.93 368.6 222.15 368.68 C222.37 368.76 222.67 368.8 223 368.8 C223.33 368.8 223.8 368.76 224.11 368.68 C224.41 368.6 224.6 368.5 224.85 368.3 C225.1 368.1 225.35 367.88 225.62 367.5 C225.89 367.12 226.16 366.7 226.47 366 C226.78 365.3 227.11 364.5 227.45 363.3 C227.8 362.1 228.18 360.72 228.56 358.8 C228.95 356.88 229.39 354.47 229.79 351.8 C230.19 349.13 230.63 345.6 230.97 342.8 C231.3 340 231.96 337.8 231.8 335 C231.64 332.2 230 326 230 326 C230 326 220.3 326 220.3 326 Z" fill="none" stroke="#2a2a2a" stroke-width="1.1" stroke-linejoin="round"/><path d="M246.5 326 C246.5 326 244.91 331.82 244.7 335 C244.49 338.18 245.03 341.92 245.22 345.1 C245.41 348.28 245.62 351.43 245.83 354.1 C246.04 356.77 246.28 359.18 246.51 361.1 C246.73 363.02 246.95 364.4 247.16 365.6 C247.37 366.8 247.58 367.6 247.78 368.3 C247.98 369 248.17 369.42 248.35 369.8 C248.54 370.18 248.72 370.4 248.91 370.6 C249.1 370.8 249.23 370.9 249.49 370.98 C249.76 371.06 250.12 371.1 250.5 371.1 C250.88 371.1 251.4 371.06 251.75 370.98 C252.09 370.9 252.29 370.8 252.57 370.6 C252.85 370.4 253.13 370.18 253.42 369.8 C253.72 369.42 254.03 369 254.36 368.3 C254.7 367.6 255.06 366.8 255.44 365.6 C255.82 364.4 256.23 363.02 256.65 361.1 C257.08 359.18 257.55 356.77 257.98 354.1 C258.42 351.43 258.86 348.28 259.26 345.1 C259.66 341.92 260.51 338.18 260.4 335 C260.29 331.82 258.6 326 258.6 326 C258.6 326 246.5 326 246.5 326 Z" fill="none" stroke="#2a2a2a" stroke-width="1.1" stroke-linejoin="round"/><path d="M276.3 326 C276.3 326 274.74 332.4 274.5 335 C274.26 337.6 274.68 338.67 274.86 341.6 C275.05 344.53 275.34 349.27 275.59 352.6 C275.84 355.93 276.1 358.93 276.37 361.6 C276.64 364.27 276.94 366.68 277.22 368.6 C277.49 370.52 277.76 371.9 278.02 373.1 C278.28 374.3 278.53 375.1 278.77 375.8 C279.01 376.5 279.23 376.92 279.46 377.3 C279.68 377.68 279.89 377.9 280.11 378.1 C280.33 378.3 280.48 378.4 280.78 378.48 C281.07 378.56 281.5 378.6 281.9 378.6 C282.3 378.6 282.83 378.56 283.19 378.48 C283.54 378.4 283.74 378.3 284.03 378.1 C284.31 377.9 284.58 377.68 284.88 377.3 C285.18 376.92 285.48 376.5 285.81 375.8 C286.15 375.1 286.5 374.3 286.88 373.1 C287.25 371.9 287.65 370.52 288.07 368.6 C288.48 366.68 288.94 364.27 289.37 361.6 C289.79 358.93 290.2 355.93 290.6 352.6 C291.01 349.27 291.49 344.53 291.79 341.6 C292.09 338.67 292.6 337.6 292.4 335 C292.2 332.4 290.6 326 290.6 326 C290.6 326 276.3 326 276.3 326 Z" fill="none" stroke="#2a2a2a" stroke-width="1.1" stroke-linejoin="round"/><path d="M308.3 326 C308.3 326 306.73 332.23 306.5 335 C306.27 337.77 306.76 339.83 306.94 342.6 C307.12 345.37 307.37 348.93 307.6 351.6 C307.83 354.27 308.08 356.68 308.31 358.6 C308.55 360.52 308.78 361.9 309 363.1 C309.22 364.3 309.43 365.1 309.63 365.8 C309.83 366.5 310.02 366.92 310.21 367.3 C310.4 367.68 310.58 367.9 310.77 368.1 C310.95 368.3 311.08 368.4 311.34 368.48 C311.59 368.56 311.95 368.6 312.3 368.6 C312.65 368.6 313.11 368.56 313.41 368.48 C313.72 368.4 313.89 368.3 314.14 368.1 C314.38 367.9 314.62 367.68 314.88 367.3 C315.14 366.92 315.4 366.5 315.69 365.8 C315.98 365.1 316.29 364.3 316.62 363.1 C316.94 361.9 317.29 360.52 317.65 358.6 C318.01 356.68 318.41 354.27 318.78 351.6 C319.15 348.93 319.56 345.37 319.86 342.6 C320.16 339.83 320.78 337.77 320.6 335 C320.42 332.23 318.8 326 318.8 326 C318.8 326 308.3 326 308.3 326 Z" fill="none" stroke="#2a2a2a" stroke-width="1.1" stroke-linejoin="round"/><path d="M335.1 326 C335.1 326 333.53 332.37 333.3 335 C333.07 337.63 333.53 339.17 333.72 341.8 C333.9 344.43 334.17 348.13 334.42 350.8 C334.66 353.47 334.93 355.88 335.19 357.8 C335.44 359.72 335.68 361.1 335.92 362.3 C336.16 363.5 336.4 364.3 336.62 365 C336.84 365.7 337.05 366.12 337.26 366.5 C337.46 366.88 337.66 367.1 337.87 367.3 C338.08 367.5 338.22 367.6 338.51 367.68 C338.8 367.76 339.2 367.8 339.6 367.8 C340 367.8 340.55 367.76 340.91 367.68 C341.27 367.6 341.48 367.5 341.78 367.3 C342.07 367.1 342.35 366.88 342.66 366.5 C342.97 366.12 343.29 365.7 343.63 365 C343.98 364.3 344.36 363.5 344.75 362.3 C345.15 361.1 345.57 359.72 346 357.8 C346.44 355.88 346.93 353.47 347.37 350.8 C347.82 348.13 348.33 344.43 348.69 341.8 C349.04 339.17 349.66 337.63 349.5 335 C349.34 332.37 347.7 326 347.7 326 C347.7 326 335.1 326 335.1 326 Z" fill="none" stroke="#2a2a2a" stroke-width="1.1" stroke-linejoin="round"/><path d="M365.1 326 C365.1 326 363.47 332.37 363.3 335 C363.13 337.63 363.74 339.17 364.08 341.8 C364.42 344.43 364.91 348.13 365.34 350.8 C365.77 353.47 366.24 355.88 366.66 357.8 C367.08 359.72 367.49 361.1 367.87 362.3 C368.25 363.5 368.62 364.3 368.95 365 C369.29 365.7 369.6 366.12 369.9 366.5 C370.2 366.88 370.48 367.1 370.76 367.3 C371.05 367.5 371.25 367.6 371.61 367.68 C371.96 367.76 372.5 367.8 372.9 367.8 C373.3 367.8 373.72 367.76 374.01 367.68 C374.31 367.6 374.45 367.5 374.67 367.3 C374.88 367.1 375.09 366.88 375.3 366.5 C375.52 366.12 375.74 365.7 375.97 365 C376.2 364.3 376.45 363.5 376.7 362.3 C376.95 361.1 377.21 359.72 377.48 357.8 C377.75 355.88 378.04 353.47 378.3 350.8 C378.56 348.13 378.85 344.43 379.05 341.8 C379.25 339.17 379.72 337.63 379.5 335 C379.28 332.37 377.7 326 377.7 326 C377.7 326 365.1 326 365.1 326 Z" fill="none" stroke="#2a2a2a" stroke-width="1.1" stroke-linejoin="round"/><path d="M394 326 C394 326 392.38 332.13 392.2 335 C392.02 337.87 392.64 340.33 392.92 343.2 C393.21 346.07 393.57 349.53 393.91 352.2 C394.25 354.87 394.62 357.28 394.95 359.2 C395.29 361.12 395.61 362.5 395.91 363.7 C396.22 364.9 396.5 365.7 396.77 366.4 C397.05 367.1 397.29 367.52 397.53 367.9 C397.78 368.28 398 368.5 398.23 368.7 C398.46 368.9 398.63 369 398.92 369.08 C399.22 369.16 399.66 369.2 400 369.2 C400.34 369.2 400.72 369.16 400.99 369.08 C401.25 369 401.39 368.9 401.59 368.7 C401.78 368.5 401.97 368.28 402.17 367.9 C402.37 367.52 402.58 367.1 402.8 366.4 C403.01 365.7 403.25 364.9 403.49 363.7 C403.73 362.5 403.98 361.12 404.24 359.2 C404.49 357.28 404.77 354.87 405.03 352.2 C405.29 349.53 405.56 346.07 405.77 343.2 C405.98 340.33 406.51 337.87 406.3 335 C406.09 332.13 404.5 326 404.5 326 C404.5 326 394 326 394 326 Z" fill="none" stroke="#2a2a2a" stroke-width="1.1" stroke-linejoin="round"/><path d="M422.2 326 C422.2 326 420.6 332.48 420.4 335 C420.2 337.52 420.69 338.25 421 341.1 C421.31 343.95 421.83 348.77 422.26 352.1 C422.69 355.43 423.13 358.43 423.57 361.1 C424.02 363.77 424.51 366.18 424.95 368.1 C425.39 370.02 425.81 371.4 426.2 372.6 C426.6 373.8 426.97 374.6 427.32 375.3 C427.67 376 427.99 376.42 428.3 376.8 C428.61 377.18 428.9 377.4 429.2 377.6 C429.49 377.8 429.7 377.9 430.07 377.98 C430.44 378.06 430.99 378.1 431.4 378.1 C431.81 378.1 432.23 378.06 432.53 377.98 C432.83 377.9 432.98 377.8 433.2 377.6 C433.41 377.4 433.62 377.18 433.84 376.8 C434.06 376.42 434.27 376 434.51 375.3 C434.74 374.6 434.99 373.8 435.24 372.6 C435.49 371.4 435.76 370.02 436.02 368.1 C436.29 366.18 436.58 363.77 436.84 361.1 C437.1 358.43 437.35 355.43 437.59 352.1 C437.83 348.77 438.11 343.95 438.28 341.1 C438.45 338.25 438.85 337.52 438.6 335 C438.35 332.48 436.8 326 436.8 326 C436.8 326 422.2 326 422.2 326 Z" fill="none" stroke="#2a2a2a" stroke-width="1.1" stroke-linejoin="round"/><path d="M453.1 326 C453.1 326 451.4 331.8 451.3 335 C451.2 338.2 452.07 342 452.49 345.2 C452.9 348.4 453.36 351.53 453.81 354.2 C454.25 356.87 454.74 359.28 455.18 361.2 C455.61 363.12 456.03 364.5 456.43 365.7 C456.82 366.9 457.19 367.7 457.54 368.4 C457.88 369.1 458.2 369.52 458.5 369.9 C458.81 370.28 459.09 370.5 459.38 370.7 C459.66 370.9 459.87 371 460.23 371.08 C460.58 371.16 461.12 371.2 461.5 371.2 C461.88 371.2 462.25 371.16 462.52 371.08 C462.79 371 462.92 370.9 463.11 370.7 C463.3 370.5 463.48 370.28 463.66 369.9 C463.85 369.52 464.04 369.1 464.24 368.4 C464.44 367.7 464.65 366.9 464.86 365.7 C465.07 364.5 465.29 363.12 465.51 361.2 C465.73 359.28 465.97 356.87 466.18 354.2 C466.39 351.53 466.6 348.4 466.78 345.2 C466.97 342 467.51 338.2 467.3 335 C467.09 331.8 465.5 326 465.5 326 C465.5 326 453.1 326 453.1 326 Z" fill="none" stroke="#2a2a2a" stroke-width="1.1" stroke-linejoin="round"/><path d="M481.5 326 C481.5 326 479.87 332.13 479.7 335 C479.53 337.87 480.17 340.33 480.47 343.2 C480.78 346.07 481.17 349.53 481.53 352.2 C481.89 354.87 482.28 357.28 482.64 359.2 C482.99 361.12 483.33 362.5 483.66 363.7 C483.98 364.9 484.29 365.7 484.58 366.4 C484.86 367.1 485.12 367.52 485.38 367.9 C485.64 368.28 485.88 368.5 486.13 368.7 C486.37 368.9 486.55 369 486.86 369.08 C487.17 369.16 487.64 369.2 488 369.2 C488.36 369.2 488.76 369.16 489.04 369.08 C489.32 369 489.46 368.9 489.67 368.7 C489.88 368.5 490.07 368.28 490.29 367.9 C490.5 367.52 490.71 367.1 490.94 366.4 C491.17 365.7 491.41 364.9 491.66 363.7 C491.91 362.5 492.18 361.12 492.44 359.2 C492.71 357.28 493.01 354.87 493.27 352.2 C493.54 349.53 493.83 346.07 494.05 343.2 C494.27 340.33 494.81 337.87 494.6 335 C494.39 332.13 492.8 326 492.8 326 C492.8 326 481.5 326 481.5 326 Z" fill="none" stroke="#2a2a2a" stroke-width="1.1" stroke-linejoin="round"/><path d="M132.7 165.9 C132.85 168.92 133.34 180.6 133.6 184 C133.86 187.4 133.97 185.72 134.25 186.3 C134.53 186.88 134.98 187.5 135.3 187.5 C135.62 187.5 135.93 186.88 136.15 186.3 C136.37 185.72 136.46 187.4 136.6 184 C136.74 180.6 136.93 168.92 137 165.9" fill="none" stroke="#2a2a2a" stroke-width="1.1" stroke-linejoin="round"/><path d="M177.4 167.7 C177.53 170.42 177.77 180.5 178.2 184 C178.62 187.5 179.3 187.72 179.95 188.7 C180.6 189.68 181.41 189.9 182.1 189.9 C182.79 189.9 183.5 189.68 184.1 188.7 C184.7 187.72 185.43 187.58 185.7 184 C185.97 180.42 185.7 170 185.7 167.2" fill="none" stroke="#2a2a2a" stroke-width="1.1" stroke-linejoin="round"/><path d="M527 167.2 C527.08 170 527.19 180.35 527.5 184 C527.81 187.65 528.33 188.05 528.85 189.1 C529.37 190.15 529.95 190.3 530.6 190.3 C531.25 190.3 532.1 190.15 532.75 189.1 C533.4 188.05 534.08 187.57 534.5 184 C534.92 180.43 535.17 170.42 535.3 167.7" fill="none" stroke="#2a2a2a" stroke-width="1.1" stroke-linejoin="round"/><path d="M575.4 166.1 C575.47 169.08 575.68 180.7 575.8 184 C575.92 187.3 575.93 185.38 576.1 185.9 C576.27 186.42 576.48 187.1 576.8 187.1 C577.12 187.1 577.67 186.42 578 185.9 C578.33 185.38 578.53 187.38 578.8 184 C579.07 180.62 579.47 168.67 579.6 165.6" fill="none" stroke="#2a2a2a" stroke-width="1.1" stroke-linejoin="round"/><path d="M117.2 217 C117.33 214.12 118.53 210.47 119.8 208.3 C121.07 206.13 122.3 205.25 124.8 204 C127.3 202.75 131.57 200.92 134.8 200.8 C138.03 200.68 141.55 202.17 144.2 203.3 C146.85 204.43 149.02 205.32 150.7 207.6 C152.38 209.88 154.13 213.88 154.3 217 C154.47 220.12 153.27 224.2 151.7 226.3 C150.13 228.4 147.72 229.72 144.9 229.6 C142.08 229.48 134.8 225.6 134.8 225.6 C134.8 225.6 127.43 229.2 124.8 229.2 C122.17 229.2 120.27 227.63 119 225.6 C117.73 223.57 117.07 219.88 117.2 217 Z" fill="#f6f3b3" stroke="#2a2a2a" stroke-width="1.1" stroke-linejoin="round"/><path d="M160.3 219.7 C160.42 216.2 161.72 210.72 163.4 208 C165.08 205.28 167.42 204.68 170.4 203.4 C173.38 202.12 177.8 200.3 181.3 200.3 C184.8 200.3 188.68 202.12 191.4 203.4 C194.12 204.68 195.92 205.42 197.6 208 C199.28 210.58 201.23 215.4 201.5 218.9 C201.77 222.4 200.62 226.58 199.2 229 C197.78 231.42 195.98 233.65 193 233.4 C190.02 233.15 181.3 227.5 181.3 227.5 C181.3 227.5 173.5 232.65 170.4 232.9 C167.3 233.15 164.38 231.2 162.7 229 C161.02 226.8 160.18 223.2 160.3 219.7 Z" fill="#f6f3b3" stroke="#2a2a2a" stroke-width="1.1" stroke-linejoin="round"/><path d="M511.4 219.9 C511.4 216.53 512.57 212.53 514.2 209.8 C515.83 207.07 518.33 204.98 521.2 203.5 C524.07 202.02 528.02 200.95 531.4 200.9 C534.78 200.85 538.7 201.85 541.5 203.2 C544.3 204.55 546.38 206.48 548.2 209 C550.02 211.52 552.22 214.93 552.4 218.3 C552.58 221.67 551.12 226.6 549.3 229.2 C547.48 231.8 544.62 234.02 541.5 233.9 C538.38 233.78 530.6 228.5 530.6 228.5 C530.6 228.5 523.93 233.35 521.2 233.6 C518.47 233.85 515.83 232.28 514.2 230 C512.57 227.72 511.4 223.27 511.4 219.9 Z" fill="#f6f3b3" stroke="#2a2a2a" stroke-width="1.1" stroke-linejoin="round"/><path d="M558.7 218.2 C558.7 215.35 559.58 212.07 561 209.6 C562.42 207.13 564.62 204.83 567.2 203.4 C569.78 201.97 573.38 201 576.5 201 C579.62 201 583.3 202.1 585.9 203.4 C588.5 204.7 590.42 206.47 592.1 208.8 C593.78 211.13 595.75 214.42 596 217.4 C596.25 220.38 595.17 224.63 593.6 226.7 C592.03 228.77 589.45 230.18 586.6 229.8 C583.75 229.42 576.5 224.4 576.5 224.4 C576.5 224.4 569.78 229.42 567.2 229.8 C564.62 230.18 562.42 228.63 561 226.7 C559.58 224.77 558.7 221.05 558.7 218.2 Z" fill="#f6f3b3" stroke="#2a2a2a" stroke-width="1.1" stroke-linejoin="round"/><path d="M219.75 200.8 C221.03 200.8 222.26 201.42 223.57 202.19 C224.89 202.96 226.57 203.97 227.62 205.42 C228.68 206.86 229.31 208.82 229.88 210.86 C230.44 212.91 230.94 215.5 231 217.67 C231.06 219.84 230.62 222.51 230.21 223.89 C229.8 225.27 230.19 224.87 228.53 225.96 C226.86 227.05 223.12 230.4 220.2 230.4 C217.27 230.4 212.79 227.05 210.97 225.96 C209.16 224.87 209.7 225.27 209.29 223.89 C208.88 222.51 208.44 219.84 208.5 217.67 C208.56 215.5 209.06 212.91 209.62 210.86 C210.19 208.82 210.82 206.86 211.88 205.42 C212.93 203.97 214.61 202.96 215.93 202.19 C217.24 201.42 218.47 200.8 219.75 200.8 Z" fill="#f6f3b3" stroke="#2a2a2a" stroke-width="1.1" stroke-linejoin="round"/><path d="M247.65 200.6 C248.92 200.6 250.16 201.22 251.47 202 C252.79 202.77 254.47 203.78 255.52 205.23 C256.57 206.68 257.21 208.65 257.77 210.7 C258.34 212.75 258.84 215.35 258.9 217.53 C258.96 219.71 258.52 222.38 258.11 223.77 C257.7 225.15 258.28 224.76 256.42 225.84 C254.57 226.93 249.92 230.3 247 230.3 C244.08 230.3 240.51 226.93 238.88 225.84 C237.24 224.76 237.6 225.15 237.19 223.77 C236.78 222.38 236.34 219.71 236.4 217.53 C236.46 215.35 236.96 212.75 237.53 210.7 C238.09 208.65 238.73 206.68 239.78 205.23 C240.82 203.78 242.51 202.77 243.82 202 C245.14 201.22 246.37 200.6 247.65 200.6 Z" fill="#f6f3b3" stroke="#2a2a2a" stroke-width="1.1" stroke-linejoin="round"/><path d="M277.1 200.6 C278.45 200.6 279.76 201.31 281.15 202.19 C282.53 203.07 284.32 204.22 285.43 205.87 C286.54 207.52 287.22 209.76 287.81 212.09 C288.4 214.42 288.94 217.39 289 219.87 C289.06 222.34 288.6 225.39 288.17 226.96 C287.73 228.54 288.31 228.09 286.38 229.33 C284.45 230.57 279.69 234.4 276.6 234.4 C273.51 234.4 269.58 230.57 267.82 229.33 C266.06 228.09 266.47 228.54 266.03 226.96 C265.6 225.39 265.14 222.34 265.2 219.87 C265.26 217.39 265.79 214.42 266.39 212.09 C266.99 209.76 267.66 207.52 268.77 205.87 C269.88 204.22 271.67 203.07 273.05 202.19 C274.44 201.31 275.75 200.6 277.1 200.6 Z" fill="#f6f3b3" stroke="#2a2a2a" stroke-width="1.1" stroke-linejoin="round"/><path d="M307.6 201 C308.97 201 310.42 201.62 311.72 202.44 C313.02 203.26 314.5 204.41 315.43 205.9 C316.36 207.38 316.87 209.54 317.28 211.37 C317.69 213.19 317.93 214.82 317.9 216.84 C317.87 218.86 317.59 221.64 317.08 223.46 C316.56 225.29 315.77 226.78 314.81 227.78 C313.85 228.79 312.51 229.16 311.31 229.5 C310.11 229.84 308.84 229.8 307.6 229.8 C306.36 229.8 305.09 229.84 303.89 229.5 C302.69 229.16 301.35 228.79 300.39 227.78 C299.43 226.78 298.64 225.29 298.12 223.46 C297.61 221.64 297.33 218.86 297.3 216.84 C297.27 214.82 297.51 213.19 297.92 211.37 C298.33 209.54 298.84 207.38 299.77 205.9 C300.7 204.41 302.18 203.26 303.48 202.44 C304.78 201.62 306.23 201 307.6 201 Z" fill="#f6f3b3" stroke="#2a2a2a" stroke-width="1.1" stroke-linejoin="round"/><path d="M338.2 200.8 C340 200.8 341.97 201.51 343.61 202.43 C345.25 203.35 347.04 204.98 348.04 206.34 C349.04 207.7 349.25 208.79 349.64 210.58 C350.03 212.37 350.23 214.6 350.38 217.1 C350.52 219.6 350.6 223.4 350.5 225.58 C350.4 227.75 350.17 228.95 349.76 230.14 C349.35 231.33 349.15 232.16 348.04 232.7 C346.93 233.24 345.58 233.28 343.12 233.4 C340.66 233.52 335.74 233.52 333.28 233.4 C330.82 233.28 329.47 233.24 328.36 232.7 C327.25 232.16 327.05 231.33 326.64 230.14 C326.23 228.95 326 227.75 325.9 225.58 C325.8 223.4 325.88 219.6 326.02 217.1 C326.17 214.6 326.37 212.37 326.76 210.58 C327.15 208.79 327.36 207.7 328.36 206.34 C329.36 204.98 331.15 203.35 332.79 202.43 C334.43 201.51 336.4 200.8 338.2 200.8 Z" fill="#f6f3b3" stroke="#2a2a2a" stroke-width="1.1" stroke-linejoin="round"/><path d="M374.35 200.8 C376.28 200.8 378.38 201.52 380.14 202.46 C381.89 203.4 383.8 205.06 384.87 206.44 C385.94 207.83 386.16 208.93 386.58 210.76 C387 212.59 387.22 214.85 387.37 217.4 C387.52 219.95 387.61 223.82 387.5 226.03 C387.39 228.25 387.15 229.47 386.71 230.68 C386.27 231.89 386.05 232.75 384.87 233.3 C383.69 233.85 382.24 233.88 379.61 234 C376.98 234.12 371.72 234.12 369.09 234 C366.46 233.88 365.01 233.85 363.83 233.3 C362.65 232.75 362.43 231.89 361.99 230.68 C361.55 229.47 361.31 228.25 361.2 226.03 C361.09 223.82 361.18 219.95 361.33 217.4 C361.48 214.85 361.7 212.59 362.12 210.76 C362.54 208.93 362.76 207.83 363.83 206.44 C364.9 205.06 366.81 203.4 368.56 202.46 C370.32 201.52 372.42 200.8 374.35 200.8 Z" fill="#f6f3b3" stroke="#2a2a2a" stroke-width="1.1" stroke-linejoin="round"/><path d="M405.6 201.3 C406.99 201.3 408.44 201.93 409.76 202.75 C411.08 203.57 412.57 204.73 413.5 206.23 C414.44 207.73 414.96 209.9 415.38 211.74 C415.79 213.58 416.03 215.22 416 217.25 C415.97 219.28 415.69 222.08 415.17 223.92 C414.65 225.76 413.85 227.26 412.88 228.27 C411.91 229.28 410.56 229.66 409.34 230 C408.13 230.34 406.85 230.3 405.6 230.3 C404.35 230.3 403.07 230.34 401.86 230 C400.64 229.66 399.29 229.28 398.32 228.27 C397.35 227.26 396.55 225.76 396.03 223.92 C395.51 222.08 395.23 219.28 395.2 217.25 C395.17 215.22 395.41 213.58 395.82 211.74 C396.24 209.9 396.76 207.73 397.7 206.23 C398.63 204.73 400.12 203.57 401.44 202.75 C402.76 201.93 404.21 201.3 405.6 201.3 Z" fill="#f6f3b3" stroke="#2a2a2a" stroke-width="1.1" stroke-linejoin="round"/><path d="M435.25 201.3 C436.62 201.3 437.94 202 439.35 202.87 C440.75 203.73 442.56 204.87 443.69 206.49 C444.81 208.12 445.49 210.32 446.1 212.62 C446.7 214.92 447.24 217.84 447.3 220.28 C447.36 222.72 446.9 225.72 446.46 227.27 C446.01 228.83 446.73 228.38 444.65 229.6 C442.57 230.83 437.13 234.6 434 234.6 C430.87 234.6 427.51 230.83 425.85 229.6 C424.19 228.38 424.49 228.83 424.04 227.27 C423.6 225.72 423.14 222.72 423.2 220.28 C423.26 217.84 423.8 214.92 424.4 212.62 C425.01 210.32 425.69 208.12 426.81 206.49 C427.94 204.87 429.75 203.73 431.15 202.87 C432.56 202 433.88 201.3 435.25 201.3 Z" fill="#f6f3b3" stroke="#2a2a2a" stroke-width="1.1" stroke-linejoin="round"/><path d="M465.85 200.8 C467.08 200.8 468.27 201.42 469.54 202.19 C470.8 202.95 472.43 203.96 473.44 205.4 C474.46 206.84 475.07 208.79 475.62 210.83 C476.16 212.87 476.65 215.45 476.7 217.62 C476.75 219.78 476.34 222.43 475.94 223.81 C475.54 225.19 476.05 224.79 474.31 225.88 C472.57 226.96 468.32 230.3 465.5 230.3 C462.68 230.3 459.01 226.96 457.39 225.88 C455.76 224.79 456.16 225.19 455.76 223.81 C455.36 222.43 454.95 219.78 455 217.62 C455.05 215.45 455.54 212.87 456.08 210.83 C456.63 208.79 457.24 206.84 458.25 205.4 C459.27 203.96 460.9 202.95 462.16 202.19 C463.43 201.42 464.62 200.8 465.85 200.8 Z" fill="#f6f3b3" stroke="#2a2a2a" stroke-width="1.1" stroke-linejoin="round"/><path d="M493.3 200.8 C494.56 200.8 495.78 201.42 497.07 202.19 C498.37 202.95 500.03 203.96 501.07 205.4 C502.11 206.84 502.73 208.79 503.29 210.83 C503.84 212.87 504.34 215.45 504.4 217.62 C504.46 219.78 504.03 222.43 503.62 223.81 C503.22 225.19 503.85 224.79 501.96 225.88 C500.07 226.96 495.19 230.3 492.3 230.3 C489.41 230.3 486.2 226.96 484.64 225.88 C483.09 224.79 483.38 225.19 482.98 223.81 C482.57 222.43 482.14 219.78 482.2 217.62 C482.26 215.45 482.75 212.87 483.31 210.83 C483.87 208.79 484.49 206.84 485.53 205.4 C486.57 203.96 488.23 202.95 489.53 202.19 C490.82 201.42 492.04 200.8 493.3 200.8 Z" fill="#f6f3b3" stroke="#2a2a2a" stroke-width="1.1" stroke-linejoin="round"/><path d="M117.3 316.8 C117.53 314 118.95 311.33 120.4 309.8 C121.85 308.27 124.25 307.75 126 307.6 C127.75 307.45 130.9 308.9 130.9 308.9 C130.9 308.9 132.77 306.63 134.4 306.7 C136.03 306.77 140.7 309.3 140.7 309.3 C140.7 309.3 146.07 306.98 148.4 307.3 C150.73 307.62 153.35 309.62 154.7 311.2 C156.05 312.78 156.62 314 156.5 316.8 C156.38 319.6 155.58 325.32 154 328 C152.42 330.68 150.03 331.73 147 332.9 C143.97 334.07 139.77 335.23 135.8 335 C131.83 334.77 126 332.9 123.2 331.5 C120.4 330.1 119.98 329.05 119 326.6 C118.02 324.15 117.07 319.6 117.3 316.8 Z" fill="#f6f3b3" stroke="#2a2a2a" stroke-width="1.1" stroke-linejoin="round"/><path d="M163.5 316.8 C163.62 313.88 164.9 310.78 166.3 309.1 C167.7 307.42 170.15 306.7 171.9 306.7 C173.65 306.7 176.8 309.1 176.8 309.1 C176.8 309.1 180.77 305.83 183.1 305.9 C185.43 305.97 190.8 309.5 190.8 309.5 C190.8 309.5 195.47 306.48 197.8 306.3 C200.13 306.12 203.12 306.65 204.8 308.4 C206.48 310.15 207.9 313.53 207.9 316.8 C207.9 320.07 206.95 325.2 204.8 328 C202.65 330.8 198.62 332.38 195 333.6 C191.38 334.82 186.95 335.42 183.1 335.3 C179.25 335.18 174.82 334.35 171.9 332.9 C168.98 331.45 167 329.28 165.6 326.6 C164.2 323.92 163.38 319.72 163.5 316.8 Z" fill="#f6f3b3" stroke="#2a2a2a" stroke-width="1.1" stroke-linejoin="round"/><path d="M504.9 316.1 C505.02 313.07 506.18 310.03 507.7 308.4 C509.22 306.77 511.55 306.12 514 306.3 C516.45 306.48 522.4 309.5 522.4 309.5 C522.4 309.5 525.9 306.2 528 306.3 C530.1 306.4 535 310.1 535 310.1 C535 310.1 539.3 307.12 541.3 307.3 C543.3 307.48 545.82 309.38 547 311.2 C548.18 313.02 548.52 315.4 548.4 318.2 C548.28 321 548.07 325.55 546.3 328 C544.53 330.45 541.08 331.73 537.8 332.9 C534.52 334.07 530.57 335 526.6 335 C522.63 335 517.27 334.3 514 332.9 C510.73 331.5 508.52 329.4 507 326.6 C505.48 323.8 504.78 319.13 504.9 316.1 Z" fill="#f6f3b3" stroke="#2a2a2a" stroke-width="1.1" stroke-linejoin="round"/><path d="M555.9 316.8 C556.13 314 557.52 310.68 559.1 309.1 C560.68 307.52 563.3 307.18 565.4 307.3 C567.5 307.42 571.7 309.8 571.7 309.8 C571.7 309.8 575.2 306.48 577.3 306.3 C579.4 306.12 584.3 308.7 584.3 308.7 C584.3 308.7 587.57 307.75 589.2 308.4 C590.83 309.05 593.05 310.97 594.1 312.6 C595.15 314.23 595.73 315.52 595.5 318.2 C595.27 320.88 594.68 326.13 592.7 328.7 C590.72 331.27 586.75 332.55 583.6 333.6 C580.45 334.65 577.18 335.23 573.8 335 C570.42 334.77 565.98 333.72 563.3 332.2 C560.62 330.68 558.93 328.47 557.7 325.9 C556.47 323.33 555.67 319.6 555.9 316.8 Z" fill="#f6f3b3" stroke="#2a2a2a" stroke-width="1.1" stroke-linejoin="round"/><path d="M214.91 314.9 C215.83 313.77 217.67 312.1 219.33 311.4 C220.98 310.7 223.01 310.7 224.85 310.7 C226.69 310.7 228.72 310.7 230.38 311.4 C232.03 312.1 233.87 313.77 234.8 314.9 C235.72 316.03 236.05 315.98 235.9 318.2 C235.75 320.42 234.83 325.73 233.91 328.2 C232.99 330.66 231.89 331.87 230.38 333 C228.86 334.13 226.69 335 224.85 335 C223.01 335 220.84 334.13 219.33 333 C217.81 331.87 216.71 330.66 215.79 328.2 C214.87 325.73 213.95 320.42 213.8 318.2 C213.65 315.98 213.98 316.03 214.91 314.9 Z" fill="#f6f3b3" stroke="#2a2a2a" stroke-width="1.1" stroke-linejoin="round"/><path d="M243.27 315 C244.17 313.87 245.96 312.2 247.57 311.5 C249.19 310.8 251.16 310.8 252.95 310.8 C254.74 310.8 256.71 310.8 258.32 311.5 C259.94 312.2 261.73 313.87 262.62 315 C263.52 316.13 263.84 316.1 263.7 318.3 C263.56 320.5 262.66 325.77 261.76 328.22 C260.87 330.67 259.79 331.87 258.32 333 C256.86 334.13 254.74 335 252.95 335 C251.16 335 249.04 334.13 247.57 333 C246.11 331.87 245.03 330.67 244.13 328.22 C243.24 325.77 242.34 320.5 242.2 318.3 C242.06 316.1 242.38 316.13 243.27 315 Z" fill="#f6f3b3" stroke="#2a2a2a" stroke-width="1.1" stroke-linejoin="round"/><path d="M271.89 312.8 C272.87 311.43 275.44 310.12 277.07 308.9 C278.7 307.68 280.53 306.22 281.69 305.5 C282.85 304.78 283.23 304.6 284 304.6 C284.77 304.6 285.15 304.78 286.31 305.5 C287.47 306.22 289.71 307.68 290.93 308.9 C292.15 310.12 293.05 311.43 293.61 312.8 C294.17 314.17 294.53 314.78 294.3 317.1 C294.07 319.42 293.18 324 292.22 326.7 C291.26 329.4 290.1 331.87 288.52 333.3 C286.95 334.73 284.68 335.3 282.75 335.3 C280.82 335.3 278.55 334.73 276.98 333.3 C275.4 331.87 274.24 329.4 273.28 326.7 C272.32 324 271.43 319.42 271.2 317.1 C270.97 314.78 270.91 314.17 271.89 312.8 Z" fill="#f6f3b3" stroke="#2a2a2a" stroke-width="1.1" stroke-linejoin="round"/><path d="M304.57 311.6 C305.38 310.47 307 308.8 308.45 308.1 C309.91 307.4 311.68 307.4 313.3 307.4 C314.92 307.4 316.69 307.4 318.15 308.1 C319.6 308.8 321.22 310.47 322.03 311.6 C322.84 312.73 323.13 312.23 323 314.9 C322.87 317.57 322.06 324.53 321.25 327.63 C320.45 330.73 319.48 332.19 318.15 333.5 C316.82 334.81 314.92 335.5 313.3 335.5 C311.68 335.5 309.78 334.81 308.45 333.5 C307.12 332.19 306.15 330.73 305.35 327.63 C304.54 324.53 303.73 317.57 303.6 314.9 C303.47 312.23 303.76 312.73 304.57 311.6 Z" fill="#f6f3b3" stroke="#2a2a2a" stroke-width="1.1" stroke-linejoin="round"/><path d="M331.36 310 C332.08 308.75 333.15 307.93 334.8 307.3 C336.45 306.68 339.1 306.5 341.25 306.25 C343.4 306 346.05 305.43 347.7 305.8 C349.35 306.18 350.42 307 351.14 308.5 C351.86 310 352.18 311.75 352 314.8 C351.82 317.85 350.96 323.79 350.06 326.82 C349.17 329.86 348.09 331.64 346.62 333 C345.16 334.36 343.04 335 341.25 335 C339.46 335 337.34 334.36 335.88 333 C334.41 331.64 333.33 329.86 332.44 326.82 C331.54 323.79 330.68 317.6 330.5 314.8 C330.32 312 330.64 311.25 331.36 310 Z" fill="#f6f3b3" stroke="#2a2a2a" stroke-width="1.1" stroke-linejoin="round"/><path d="M362.43 308.5 C363.12 307 364.15 306.18 365.74 305.8 C367.33 305.43 369.88 306 371.95 306.25 C374.02 306.5 376.57 306.68 378.16 307.3 C379.75 307.93 380.78 308.75 381.47 310 C382.16 311.25 382.47 312 382.3 314.8 C382.13 317.6 381.3 323.79 380.44 326.82 C379.57 329.86 378.54 331.64 377.13 333 C375.71 334.36 373.68 335 371.95 335 C370.23 335 368.19 334.36 366.78 333 C365.36 331.64 364.33 329.86 363.46 326.82 C362.6 323.79 361.77 317.85 361.6 314.8 C361.43 311.75 361.74 310 362.43 308.5 Z" fill="#f6f3b3" stroke="#2a2a2a" stroke-width="1.1" stroke-linejoin="round"/><path d="M390.68 311.6 C391.5 310.47 393.13 308.8 394.6 308.1 C396.07 307.4 397.87 307.4 399.5 307.4 C401.13 307.4 402.93 307.4 404.4 308.1 C405.87 308.8 407.5 310.47 408.32 311.6 C409.14 312.73 409.43 312.29 409.3 314.9 C409.17 317.51 408.35 324.26 407.54 327.27 C406.72 330.29 405.74 331.71 404.4 333 C403.06 334.29 401.13 335 399.5 335 C397.87 335 395.94 334.29 394.6 333 C393.26 331.71 392.28 330.29 391.46 327.27 C390.65 324.26 389.83 317.51 389.7 314.9 C389.57 312.29 389.86 312.73 390.68 311.6 Z" fill="#f6f3b3" stroke="#2a2a2a" stroke-width="1.1" stroke-linejoin="round"/><path d="M418.91 312.8 C419.33 311.43 419.6 310.12 420.69 308.9 C421.78 307.68 424.25 306.22 425.43 305.5 C426.62 304.78 427.01 304.6 427.8 304.6 C428.59 304.6 428.99 304.78 430.17 305.5 C431.36 306.22 433.07 307.68 434.91 308.9 C436.75 310.12 440.02 311.43 441.19 312.8 C442.35 314.17 442.14 314.82 441.9 317.1 C441.66 319.38 440.75 323.84 439.77 326.49 C438.78 329.14 437.59 331.58 435.97 333 C434.36 334.42 432.02 335 430.05 335 C428.07 335 425.74 334.42 424.12 333 C422.51 331.58 421.32 329.14 420.33 326.49 C419.35 323.84 418.44 319.38 418.2 317.1 C417.96 314.82 418.5 314.17 418.91 312.8 Z" fill="#f6f3b3" stroke="#2a2a2a" stroke-width="1.1" stroke-linejoin="round"/><path d="M449.7 315 C450.62 313.87 452.45 312.2 454.1 311.5 C455.75 310.8 457.77 310.8 459.6 310.8 C461.43 310.8 463.45 310.8 465.1 311.5 C466.75 312.2 468.58 313.87 469.5 315 C470.42 316.13 470.75 316.1 470.6 318.3 C470.45 320.5 469.54 325.77 468.62 328.22 C467.7 330.67 466.6 331.87 465.1 333 C463.6 334.13 461.43 335 459.6 335 C457.77 335 455.6 334.13 454.1 333 C452.6 331.87 451.5 330.67 450.58 328.22 C449.66 325.77 448.75 320.5 448.6 318.3 C448.45 316.1 448.78 316.13 449.7 315 Z" fill="#f6f3b3" stroke="#2a2a2a" stroke-width="1.1" stroke-linejoin="round"/><path d="M477.8 315.5 C478.72 314.37 480.55 312.7 482.2 312 C483.85 311.3 485.87 311.3 487.7 311.3 C489.53 311.3 491.55 311.3 493.2 312 C494.85 312.7 496.68 314.37 497.6 315.5 C498.52 316.63 498.85 316.66 498.7 318.8 C498.55 320.94 497.64 326 496.72 328.36 C495.8 330.73 494.7 331.89 493.2 333 C491.7 334.11 489.53 335 487.7 335 C485.87 335 483.7 334.11 482.2 333 C480.7 331.89 479.6 330.73 478.68 328.36 C477.76 326 476.85 320.94 476.7 318.8 C476.55 316.66 476.88 316.63 477.8 315.5 Z" fill="#f6f3b3" stroke="#2a2a2a" stroke-width="1.1" stroke-linejoin="round"/><rect x="61" y="244" width="598" height="2" fill="#bcbcb4"/><rect x="61" y="267" width="598" height="1" fill="#404040"/><rect x="61" y="289" width="598" height="2" fill="#c0c0b8"/><rect x="356" y="150" width="1.2" height="235" fill="#404040"/><circle cx="135" cy="187" r="1.9" fill="#127a32" stroke="none" stroke-width="0.8"/><circle cx="248" cy="187" r="1.9" fill="#127a32" stroke="none" stroke-width="0.8"/><circle cx="336.8" cy="187.1" r="1.9" fill="#127a32" stroke="none" stroke-width="0.8"/><circle cx="404.8" cy="184.2" r="1.9" fill="#127a32" stroke="none" stroke-width="0.8"/><circle cx="492.7" cy="181" r="1.9" fill="#127a32" stroke="none" stroke-width="0.8"/><circle cx="306.9" cy="174.7" r="2.3" fill="#d83030" stroke="none" stroke-width="0.8"/><circle cx="312" cy="249.6" r="3" fill="#d83838" stroke="none" stroke-width="0.8"/><circle cx="371" cy="346" r="1.6" fill="#fff" stroke="#555" stroke-width="0.8"/><circle cx="459" cy="361.6" r="2.1" fill="#d83030" stroke="none" stroke-width="0.8"/></svg>
<div class="t" style="left:39.4px;top:171px;overflow:visible;font-size:9px;color:#111;"><span id="f31" style="display:inline-block;transform-origin:0 0;transform:scaleX(0.8300)">7mm</span></div>
<div class="t" style="left:39.4px;top:182px;overflow:visible;font-size:9px;color:#111;"><span id="f32" style="display:inline-block;transform-origin:0 0;transform:scaleX(0.8300)">4mm</span></div>
<div class="t" style="left:39.4px;top:194px;overflow:visible;font-size:9px;color:#111;"><span id="f33" style="display:inline-block;transform-origin:0 0;transform:scaleX(0.8300)">0mm</span></div>
<div class="t" style="left:39.4px;top:330px;overflow:visible;font-size:9px;color:#111;"><span id="f34" style="display:inline-block;transform-origin:0 0;transform:scaleX(0.8300)">0mm</span></div>
<div class="t" style="left:39.4px;top:342px;overflow:visible;font-size:9px;color:#111;"><span id="f35" style="display:inline-block;transform-origin:0 0;transform:scaleX(0.8300)">4mm</span></div>
<div class="t" style="left:39.4px;top:352px;overflow:visible;font-size:9px;color:#111;"><span id="f36" style="display:inline-block;transform-origin:0 0;transform:scaleX(0.8300)">7mm</span></div>
<div class="t" style="left:35px;top:249px;overflow:visible;font-size:9px;color:#111;font-size:10px"><span id="f37" style="display:inline-block;transform-origin:0 0;transform:scaleX(0.8267)">出血点</span></div>
<div class="t" style="left:35px;top:272px;overflow:visible;font-size:9px;color:#111;font-size:10px"><span id="f38" style="display:inline-block;transform-origin:0 0;transform:scaleX(0.8267)">出血点</span></div>
<div class="a" style="left:50px;top:412px;width:43px;height:11px;border-bottom:1px solid #c0c0c0;border-right:1px solid #d0d0d0"></div>
<div class="t" style="left:50px;top:413px;overflow:visible;font-size:10px;color:#111"><span id="f39" style="display:inline-block;transform-origin:0 0;transform:scaleX(0.8540)">出血歯面数</span></div>
<div class="a" style="left:50px;top:426px;width:21px;height:12px;background:#fff;border-right:1px solid #c8c8c8;border-bottom:1px solid #c8c8c8"></div>
<div class="t" style="left:59px;top:427px;overflow:visible;font-size:10px;color:#222"><span id="f40" style="display:inline-block;transform-origin:0 0;transform:scaleX(0.7191)">1</span></div>
<div class="a" style="left:73px;top:426px;width:9px;height:12px;background:#fff;border-right:1px solid #c8c8c8;border-bottom:1px solid #c8c8c8"></div>
<div class="t" style="left:74px;top:427px;overflow:visible;font-size:10px;color:#222"><span id="f41" style="display:inline-block;transform-origin:0 0;transform:scaleX(0.7500)">面</span></div>
<div class="a" style="left:84px;top:426px;width:20px;height:12px;background:#fff;border-right:1px solid #c8c8c8;border-bottom:1px solid #c8c8c8"></div>
<div class="t" style="left:90.5px;top:427px;overflow:visible;font-size:10px;color:#222"><span id="f42" style="display:inline-block;transform-origin:0 0;transform:scaleX(0.7191)">.9</span></div>
<div class="a" style="left:105px;top:426px;width:10px;height:12px;background:#fff;border-right:1px solid #c8c8c8;border-bottom:1px solid #c8c8c8"></div>
<div class="t" style="left:106px;top:427px;overflow:visible;font-size:10px;color:#222"><span id="f43" style="display:inline-block;transform-origin:0 0;transform:scaleX(0.8421)">%</span></div>
<svg class="a" style="left:0;top:0" width="717" height="514"><rect x="117" y="423" width="199" height="2" fill="#2840a0"/><rect x="117" y="417" width="2" height="8" fill="#2840a0"/><rect x="166" y="417" width="2" height="8" fill="#2840a0"/><rect x="215" y="417" width="2" height="8" fill="#2840a0"/><rect x="264" y="417" width="2" height="8" fill="#2840a0"/><rect x="313" y="417" width="2" height="8" fill="#2840a0"/><rect x="401" y="423" width="199" height="2" fill="#2840a0"/><rect x="401" y="417" width="2" height="8" fill="#2840a0"/><rect x="450" y="417" width="2" height="8" fill="#2840a0"/><rect x="499" y="417" width="2" height="8" fill="#2840a0"/><rect x="548" y="417" width="2" height="8" fill="#2840a0"/><rect x="597" y="417" width="2" height="8" fill="#2840a0"/><rect x="117" y="427" width="2" height="12" fill="#e03030"/><rect x="403" y="427" width="16" height="11" fill="#127a32"/><rect x="403" y="441" width="10" height="11" fill="#d84040"/></svg>
<div class="t" style="left:109.6px;top:404px;overflow:visible;font-size:9px;color:#333"><span id="f44" style="display:inline-block;transform-origin:0 0;transform:scaleX(0.7222)">0%</span></div>
<div class="t" style="left:156.9px;top:404px;overflow:visible;font-size:9px;color:#333"><span id="f45" style="display:inline-block;transform-origin:0 0;transform:scaleX(0.7216)">25%</span></div>
<div class="t" style="left:206px;top:404px;overflow:visible;font-size:9px;color:#333"><span id="f46" style="display:inline-block;transform-origin:0 0;transform:scaleX(0.7216)">50%</span></div>
<div class="t" style="left:255.6px;top:404px;overflow:visible;font-size:9px;color:#333"><span id="f47" style="display:inline-block;transform-origin:0 0;transform:scaleX(0.7438)">75%</span></div>
<div class="t" style="left:394px;top:404px;overflow:visible;font-size:9px;color:#333"><span id="f48" style="display:inline-block;transform-origin:0 0;transform:scaleX(0.9275)">0面</span></div>
<div class="t" style="left:441px;top:404px;overflow:visible;font-size:9px;color:#333"><span id="f49" style="display:inline-block;transform-origin:0 0;transform:scaleX(0.8940)">25面</span></div>
<div class="t" style="left:490px;top:404px;overflow:visible;font-size:9px;color:#333"><span id="f50" style="display:inline-block;transform-origin:0 0;transform:scaleX(0.8940)">50面</span></div>
<div class="t" style="left:539.4px;top:404px;overflow:visible;font-size:9px;color:#333"><span id="f51" style="display:inline-block;transform-origin:0 0;transform:scaleX(0.9098)">75面</span></div>
<div class="a" style="left:323px;top:413px;width:76px;height:11px;background:#e6e6e6;border-right:1px solid #c0c0c0;border-bottom:1px solid #b0b0b0"></div>
<div class="t" style="left:326px;top:413px;overflow:visible;font-size:10px;color:#333"><span id="f52" style="display:inline-block;transform-origin:0 0;transform:scaleX(0.7778)">プロービングデプス</span></div>
<div class="a" style="left:338px;top:426px;width:26px;height:12px;background:#fff;border-right:1px solid #c8c8c8;border-bottom:1px solid #c8c8c8"></div>
<div class="t" style="left:339.5px;top:427px;overflow:visible;font-size:8px;color:#1a8a2a"><span id="f53" style="display:inline-block;transform-origin:0 0;transform:scaleX(0.9240)">4-6mm</span></div>
<div class="a" style="left:365px;top:426px;width:22px;height:12px;background:#fff;border-right:1px solid #c8c8c8;border-bottom:1px solid #c8c8c8"></div>
<div class="t" style="left:367px;top:428px;overflow:visible;font-size:9px;color:#111"><span id="f54" style="display:inline-block;transform-origin:0 0;transform:scaleX(0.8972)">8</span></div>
<div class="a" style="left:388px;top:426px;width:10px;height:12px;background:#fff;border-right:1px solid #c8c8c8;border-bottom:1px solid #c8c8c8"></div>
<div class="t" style="left:388.9px;top:427px;overflow:visible;font-size:10px;color:#222"><span id="f55" style="display:inline-block;transform-origin:0 0;transform:scaleX(0.8000)">面</span></div>
<div class="a" style="left:338px;top:441px;width:26px;height:12px;background:#fff;border-right:1px solid #c8c8c8;border-bottom:1px solid #c8c8c8"></div>
<div class="t" style="left:341.8px;top:442px;overflow:visible;font-size:8px;color:#d82020"><span id="f56" style="display:inline-block;transform-origin:0 0;transform:scaleX(0.8353)">≧7mm</span></div>
<div class="a" style="left:365px;top:441px;width:22px;height:12px;background:#fff;border-right:1px solid #c8c8c8;border-bottom:1px solid #c8c8c8"></div>
<div class="t" style="left:367px;top:443px;overflow:visible;font-size:9px;color:#111"><span id="f57" style="display:inline-block;transform-origin:0 0;transform:scaleX(0.8972)">5</span></div>
<div class="a" style="left:388px;top:441px;width:10px;height:12px;background:#fff;border-right:1px solid #c8c8c8;border-bottom:1px solid #c8c8c8"></div>
<div class="t" style="left:388.9px;top:442px;overflow:visible;font-size:10px;color:#222"><span id="f58" style="display:inline-block;transform-origin:0 0;transform:scaleX(0.8000)">面</span></div>
</body></html>
